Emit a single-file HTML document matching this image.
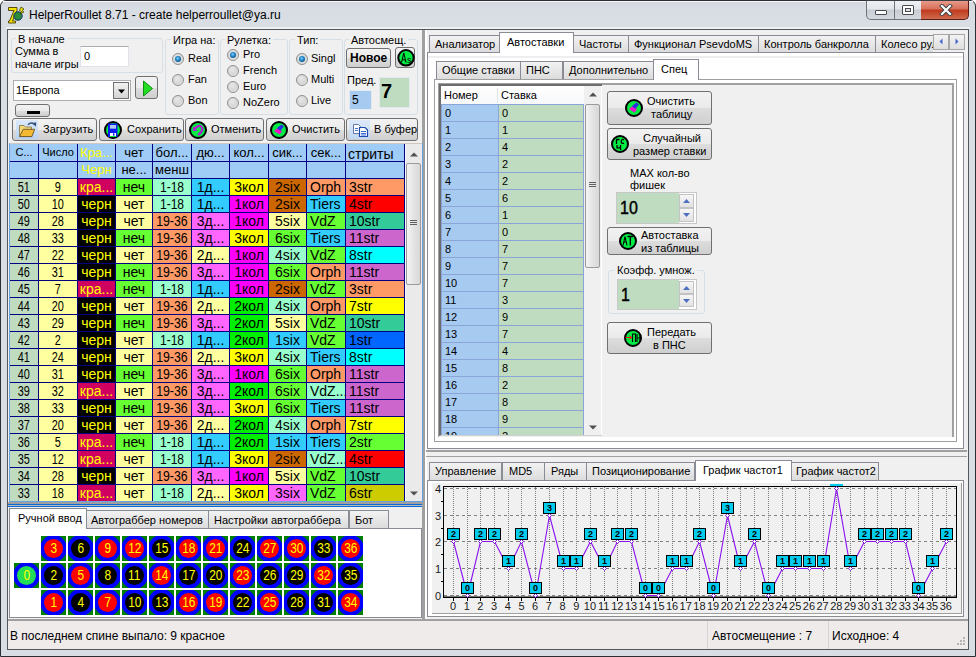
<!DOCTYPE html><html><head><meta charset="utf-8"><style>
*{margin:0;padding:0;box-sizing:border-box}
html,body{width:976px;height:657px;overflow:hidden;background:#fff}
body{position:relative;font-family:"Liberation Sans",sans-serif;font-size:11px;color:#000}
div{position:absolute}
.t{white-space:nowrap;line-height:13px}
.btn{border:1px solid #707070;border-radius:3px;background:linear-gradient(#f2f2f2 0%,#ebebeb 50%,#dddddd 51%,#cfcfcf 100%)}
.gb{border:1px solid #d5dfe5;border-radius:3px}
.radio{width:12px;height:12px;border-radius:50%;border:1px solid #8e8f8f;background:radial-gradient(circle at 40% 35%,#e8e8e8 0%,#d6d6d6 55%,#f4f4f4 100%)}
.radio.on::after{content:"";position:absolute;left:2px;top:2px;width:6px;height:6px;border-radius:50%;background:radial-gradient(circle at 45% 40%,#7fd0ff 0%,#1a7fc0 45%,#0a3c6a 100%)}
.tab{border:1px solid #898c95;border-bottom:none;background:linear-gradient(#f2f2f2,#dcdcdc)}
.tabon{border:1px solid #898c95;border-bottom:none;background:#fff}
.cell{overflow:hidden;white-space:nowrap;line-height:16px}
</style></head><body><div style="left:0;top:0;width:976px;height:657px;border:1px solid #2b2f33;border-radius:6px 6px 0 0;background:linear-gradient(#d5d8dd 0px,#d8dce3 6px,#d9dde4 29px,#d9dde4 100%)"></div>
<div style="left:3px;top:1px;width:970px;height:1px;background:#f4f6f9"></div>
<div style="left:6px;top:27px;width:964px;height:2px;background:#eef0f3"></div>
<div class="t" style="left:29px;top:8px;font-size:12px;line-height:15px;color:#000">HelperRoullet 8.71 - create helperroullet@ya.ru</div>
<svg style="position:absolute;left:7px;top:6px" width="18" height="18" viewBox="0 0 18 18">
<path d="M1.5 1.5 H10 V4.5 L5.5 15 H8.5 V17 H1.5 V15 H2.5 L7 4.5 H1.5 Z" fill="#f2e200" stroke="#4a3c00" stroke-width="0.9"/>
<circle cx="11" cy="10" r="4.2" fill="#2c8c3c" stroke="#0d2a6a" stroke-width="1"/>
<path d="M14 1 L17 3 L15 4.5 L17 6 L13 8 L14.5 5.5 L12.5 4.5 Z" fill="#f0e800" stroke="#303000" stroke-width="0.7"/>
</svg>
<div style="left:866px;top:0;width:29px;height:20px;border:1px solid #6f7478;border-top:none;border-radius:0 0 0 5px;background:linear-gradient(#eef1f4 0%,#e3e7ec 45%,#c9ced4 55%,#d5d9de 100%)"></div>
<div style="left:875px;top:10px;width:12px;height:5px;border:1px solid #474b50;background:#fff;border-radius:1px"></div>
<div style="left:894px;top:0;width:28px;height:20px;border:1px solid #6f7478;border-top:none;background:linear-gradient(#eef1f4 0%,#e3e7ec 45%,#c9ced4 55%,#d5d9de 100%)"></div>
<div style="left:902px;top:5px;width:12px;height:10px;border:1px solid #474b50;background:#fff;border-radius:1px"></div>
<div style="left:905px;top:8px;width:6px;height:4px;border:1px solid #474b50;background:#dfe3e8"></div>
<div style="left:921px;top:0;width:48px;height:20px;border:1px solid #5a1d12;border-top:none;border-left:none;border-radius:0 0 5px 0;background:linear-gradient(#e8a08f 0%,#d9725c 45%,#c13b1e 55%,#cf6a4e 100%)"></div>
<svg style="position:absolute;left:938px;top:4px" width="16" height="12" viewBox="0 0 16 12"><path d="M4 2 L12 10 M12 2 L4 10" stroke="#3b3f46" stroke-width="4" stroke-linecap="square"/><path d="M4 2 L12 10 M12 2 L4 10" stroke="#fff" stroke-width="2.2" stroke-linecap="square"/></svg>
<div style="left:866px;top:0;width:103px;height:1px;background:#3a3d42"></div>
<div style="left:7px;top:29px;width:962px;height:621px;border:1px solid #52575c;background:#f0f0f0"></div>
<div class="gb" style="left:11px;top:38px;width:152px;height:35px"></div>
<div class="t" style="left:16px;top:33px;padding:0 2px;background:#f0f0f0">В начале</div>
<div class="t" style="left:15px;top:45px;">Сумма в</div>
<div class="t" style="left:15px;top:58px;">начале игры</div>
<div style="left:80px;top:46px;width:49px;height:21px;border:1px solid #e2e3ea;border-top-color:#abadb3;background:#fff"></div>
<div class="t" style="left:84px;top:50px;">0</div>
<div style="left:13px;top:80px;width:118px;height:21px;border:1px solid #abadb3;background:#fff"></div>
<div class="t" style="left:16px;top:84px;">1Европа</div>
<div style="left:113px;top:82px;width:16px;height:17px;border:1px solid #707070;background:linear-gradient(#f2f2f2,#d5d5d5)"></div>
<svg style="position:absolute;left:118px;top:89px" width="7" height="5"><path d="M0 0.5H7L3.5 4.5Z" fill="#000"/></svg>
<div class="btn" style="left:135px;top:76px;width:23px;height:23px"></div>
<svg style="position:absolute;left:142px;top:80px" width="12" height="17"><path d="M1.5 1 L10.5 8.5 L1.5 16 Z" fill="#22dd22" stroke="#109010" stroke-width="1"/></svg>
<div class="btn" style="left:15px;top:104px;width:35px;height:13px"></div>
<div style="left:27px;top:111px;width:13px;height:3px;background:#000"></div>
<div class="gb" style="left:165px;top:39px;width:54px;height:76px"></div>
<div class="t" style="left:171px;top:34px;padding:0 2px;background:#f0f0f0">Игра на:</div>
<div class="radio on" style="left:172px;top:53px"></div>
<div class="t" style="left:188px;top:52px;">Real</div>
<div class="radio" style="left:172px;top:74px"></div>
<div class="t" style="left:188px;top:73px;">Fan</div>
<div class="radio" style="left:172px;top:95px"></div>
<div class="t" style="left:188px;top:94px;">Bon</div>
<div class="gb" style="left:220px;top:39px;width:68px;height:76px"></div>
<div class="t" style="left:225px;top:34px;padding:0 2px;background:#f0f0f0">Рулетка:</div>
<div class="radio on" style="left:227px;top:49px"></div>
<div class="t" style="left:243px;top:48px;">Pro</div>
<div class="radio" style="left:227px;top:65px"></div>
<div class="t" style="left:243px;top:64px;">French</div>
<div class="radio" style="left:227px;top:81px"></div>
<div class="t" style="left:243px;top:80px;">Euro</div>
<div class="radio" style="left:227px;top:97px"></div>
<div class="t" style="left:243px;top:96px;">NoZero</div>
<div class="gb" style="left:289px;top:39px;width:54px;height:76px"></div>
<div class="t" style="left:295px;top:34px;padding:0 2px;background:#f0f0f0">Тип:</div>
<div class="radio on" style="left:296px;top:53px"></div>
<div class="t" style="left:311px;top:52px;">Singl</div>
<div class="radio" style="left:296px;top:74px"></div>
<div class="t" style="left:311px;top:73px;">Multi</div>
<div class="radio" style="left:296px;top:95px"></div>
<div class="t" style="left:311px;top:94px;">Live</div>
<div class="gb" style="left:344px;top:39px;width:74px;height:76px"></div>
<div class="t" style="left:349px;top:34px;padding:0 2px;background:#f0f0f0">Автосмещ.</div>
<div class="btn" style="left:346px;top:48px;width:45px;height:20px"></div>
<div class="t" style="left:350px;top:51px;font-weight:bold;font-size:12px;line-height:14px">Новое</div>
<div class="btn" style="left:395px;top:47px;width:20px;height:21px"></div>
<svg style="position:absolute;left:396px;top:48px" width="20" height="20" viewBox="0 0 20 20"><circle cx="10" cy="9.8" r="7.7" fill="#00ec44" stroke="#000" stroke-width="2"/><path d="M5.5 14.5 L7.8 5 L10 14.5 M6.3 11.8 H9.3" stroke="#000" stroke-width="1" fill="none"/><text x="13.2" y="14.5" font-family="Liberation Sans" font-size="9" text-anchor="middle" fill="#000">s</text></svg>
<div class="t" style="left:347px;top:74px;">Пред.</div>
<div style="left:349px;top:90px;width:23px;height:20px;border:1px solid #e3e9ef;background:#a6caf0"></div>
<div class="t" style="left:352px;top:93px;font-size:12px;line-height:14px">5</div>
<div style="left:379px;top:77px;width:31px;height:31px;border:1px solid #e3e9ef;background:#c0dcc0"></div>
<div class="t" style="left:381px;top:80px;font-size:20px;line-height:22px;font-weight:bold">7</div>
<div class="btn" style="left:12px;top:118px;width:85px;height:23px"></div>
<div style="left:16px;top:120px;width:22px;height:19px;background:linear-gradient(#dde9f9,#b8d2f1)"></div>
<svg style="position:absolute;left:15px;top:120px" width="24" height="19" viewBox="0 0 24 19"><path d="M4.5 5.5 H9 L10.5 7 H16.5 V16.5 H4.5 Z" fill="#f3d873" stroke="#8a7a50" stroke-width="0.9"/><path d="M8.2 9.3 H19.7 L16.9 16.6 H4.6 Z" fill="#f4b933" stroke="#6a5424" stroke-width="0.9"/><path d="M13 4.8 Q16 1.6 19.2 4.2" stroke="#34507a" stroke-width="1.6" fill="none"/><path d="M17.3 3.2 L21 6.8 L21.2 2.2 Z" fill="#34507a"/></svg>
<div class="t" style="left:43px;top:123px;">Загрузить</div>
<div class="btn" style="left:99px;top:118px;width:85px;height:23px"></div>
<svg style="position:absolute;left:103px;top:120px" width="20" height="20" viewBox="0 0 20 20"><circle cx="10" cy="10" r="8" fill="#00ec44" stroke="#000" stroke-width="2"/><rect x="5" y="3.5" width="9.5" height="13.5" fill="#0a1cf0"/><rect x="7" y="5" width="6" height="3.7" fill="#b0c8f0"/><rect x="7" y="13" width="6" height="3" fill="#fff"/><rect x="10" y="13.3" width="1.4" height="2.4" fill="#0a1cf0"/><rect x="7" y="16" width="6" height="1" fill="#00ec44"/></svg>
<div class="t" style="left:127px;top:123px;">Сохранить</div>
<div class="btn" style="left:185px;top:118px;width:79px;height:23px"></div>
<svg style="position:absolute;left:188px;top:120px" width="20" height="20" viewBox="0 0 20 20"><circle cx="10" cy="10" r="8" fill="#00ec44" stroke="#000" stroke-width="2"/><path d="M5 6.5 L5 11 L9.5 11 Z" fill="#b020d0"/><path d="M6.5 9 Q9 5.5 12.5 6 Q15 7 14 10.5 Q13 13 10 15" stroke="#b020d0" stroke-width="2.2" fill="none"/></svg>
<div class="t" style="left:211px;top:123px;">Отменить</div>
<div class="btn" style="left:266px;top:118px;width:79px;height:23px"></div>
<svg style="position:absolute;left:269px;top:120px" width="20" height="20" viewBox="0 0 20 20"><circle cx="10" cy="10" r="8" fill="#00ec44" stroke="#000" stroke-width="2"/><path d="M8 8 L12.5 4.5 L15 6.5 L12.5 9.5 L11 12.5 Z" fill="#2a30e0"/><path d="M5 11 L8 8.5 L13 11.5 L10.5 14.5 Z" fill="#f010c8"/></svg>
<div class="t" style="left:292px;top:123px;">Очистить</div>
<div class="btn" style="left:346px;top:118px;width:72px;height:23px"></div>
<div style="left:349px;top:120px;width:21px;height:19px;background:linear-gradient(#dde9f9,#c2d8f2)"></div>
<svg style="position:absolute;left:349px;top:120px" width="21" height="19" viewBox="0 0 21 19"><path d="M4.5 4.5 H9.5 L11.5 6.5 V13.5 H4.5 Z" fill="#fff" stroke="#6478a8" stroke-width="1"/><path d="M6 8.5H9M6 10.5H9" stroke="#4a78d0" stroke-width="1"/><path d="M10.5 7.5 H16 L18.5 10 V16.5 H10.5 Z" fill="#fff" stroke="#1c48b0" stroke-width="1.2"/><path d="M12 11.5H17M12 13.5H17M12 15H17" stroke="#3a6ad8" stroke-width="1"/></svg>
<div class="t" style="left:374px;top:123px;">В буфер</div>
<div style="left:9px;top:143px;width:414px;height:359px;border:1px solid #6aa2e0;border-top-color:#d0c8c0;background:#f0f0f0"></div>
<div style="left:10px;top:144px;width:395px;height:357px;background:#000080"></div>
<div class="cell" style="left:10px;top:144px;width:28px;height:17px;background:#9fcbf7"></div>
<div class="cell" style="left:10px;top:144px;width:28px;height:17px;color:#000;text-align:center;font-size:11px;line-height:17px;">С...</div>
<div class="cell" style="left:39px;top:144px;width:38px;height:17px;background:#9fcbf7"></div>
<div class="cell" style="left:39px;top:144px;width:38px;height:17px;color:#000;text-align:center;font-size:11px;line-height:17px;">Число</div>
<div class="cell" style="left:78px;top:144px;width:37px;height:17px;background:#9fcbf7"></div>
<div class="cell" style="left:78px;top:144px;width:37px;height:17px;color:#ffff00;text-align:center;font-size:13px;line-height:17px;">Кра...</div>
<div class="cell" style="left:116px;top:144px;width:36px;height:17px;background:#9fcbf7"></div>
<div class="cell" style="left:116px;top:144px;width:36px;height:17px;color:#000;text-align:center;font-size:13px;line-height:17px;">чет</div>
<div class="cell" style="left:153px;top:144px;width:38px;height:17px;background:#9fcbf7"></div>
<div class="cell" style="left:153px;top:144px;width:38px;height:17px;color:#000;text-align:center;font-size:13px;line-height:17px;">бол...</div>
<div class="cell" style="left:192px;top:144px;width:37px;height:17px;background:#9fcbf7"></div>
<div class="cell" style="left:192px;top:144px;width:37px;height:17px;color:#000;text-align:center;font-size:13px;line-height:17px;">дю...</div>
<div class="cell" style="left:230px;top:144px;width:38px;height:17px;background:#9fcbf7"></div>
<div class="cell" style="left:230px;top:144px;width:38px;height:17px;color:#000;text-align:center;font-size:13px;line-height:17px;">кол...</div>
<div class="cell" style="left:269px;top:144px;width:37px;height:17px;background:#9fcbf7"></div>
<div class="cell" style="left:269px;top:144px;width:37px;height:17px;color:#000;text-align:center;font-size:13px;line-height:17px;">сик...</div>
<div class="cell" style="left:307px;top:144px;width:38px;height:17px;background:#9fcbf7"></div>
<div class="cell" style="left:307px;top:144px;width:38px;height:17px;color:#000;text-align:center;font-size:13px;line-height:17px;">сек...</div>
<div class="cell" style="left:346px;top:144px;width:58px;height:17px;background:#9fcbf7"></div>
<div class="cell" style="left:346px;top:144px;width:58px;height:17px;color:#000;text-align:center;font-size:14px;line-height:17px;"></div>
<div class="t" style="left:348px;top:146px;font-size:14px;line-height:16px">стриты</div>
<div class="cell" style="left:10px;top:162px;width:28px;height:16px;background:#9fcbf7"></div>
<div class="cell" style="left:10px;top:162px;width:28px;height:16px;color:#000;text-align:center;font-size:13px;line-height:16px;"></div>
<div class="cell" style="left:39px;top:162px;width:38px;height:16px;background:#9fcbf7"></div>
<div class="cell" style="left:39px;top:162px;width:38px;height:16px;color:#000;text-align:center;font-size:13px;line-height:16px;"></div>
<div class="cell" style="left:78px;top:162px;width:37px;height:16px;background:#9fcbf7"></div>
<div class="cell" style="left:78px;top:162px;width:37px;height:16px;color:#ffff00;text-align:center;font-size:13px;line-height:16px;">Черн</div>
<div class="cell" style="left:116px;top:162px;width:36px;height:16px;background:#9fcbf7"></div>
<div class="cell" style="left:116px;top:162px;width:36px;height:16px;color:#000;text-align:center;font-size:13px;line-height:16px;">не...</div>
<div class="cell" style="left:153px;top:162px;width:38px;height:16px;background:#9fcbf7"></div>
<div class="cell" style="left:153px;top:162px;width:38px;height:16px;color:#000;text-align:center;font-size:13px;line-height:16px;">менш</div>
<div class="cell" style="left:192px;top:162px;width:37px;height:16px;background:#9fcbf7"></div>
<div class="cell" style="left:192px;top:162px;width:37px;height:16px;color:#000;text-align:center;font-size:13px;line-height:16px;"></div>
<div class="cell" style="left:230px;top:162px;width:38px;height:16px;background:#9fcbf7"></div>
<div class="cell" style="left:230px;top:162px;width:38px;height:16px;color:#000;text-align:center;font-size:13px;line-height:16px;"></div>
<div class="cell" style="left:269px;top:162px;width:37px;height:16px;background:#9fcbf7"></div>
<div class="cell" style="left:269px;top:162px;width:37px;height:16px;color:#000;text-align:center;font-size:13px;line-height:16px;"></div>
<div class="cell" style="left:307px;top:162px;width:38px;height:16px;background:#9fcbf7"></div>
<div class="cell" style="left:307px;top:162px;width:38px;height:16px;color:#000;text-align:center;font-size:13px;line-height:16px;"></div>
<div class="cell" style="left:346px;top:162px;width:58px;height:16px;background:#9fcbf7"></div>
<div class="cell" style="left:346px;top:162px;width:58px;height:16px;color:#000;text-align:center;font-size:13px;line-height:16px;"></div>
<div class="cell" style="left:10px;top:179px;width:28px;height:16px;background:#c0dcc0"></div>
<div class="cell" style="left:10px;top:179px;width:28px;height:16px;color:#000;text-align:center;font-size:14px;line-height:16px;"><span style="display:inline-block;transform:scaleX(0.78)">51</span></div>
<div class="cell" style="left:39px;top:179px;width:38px;height:16px;background:#ffff9f"></div>
<div class="cell" style="left:39px;top:179px;width:38px;height:16px;color:#000;text-align:center;font-size:14px;line-height:16px;"><span style="display:inline-block;transform:scaleX(0.78)">9</span></div>
<div class="cell" style="left:78px;top:179px;width:37px;height:16px;background:#d00060"></div>
<div class="cell" style="left:78px;top:179px;width:37px;height:16px;color:#ffff00;text-align:center;font-size:14px;line-height:16px;">кра...</div>
<div class="cell" style="left:116px;top:179px;width:36px;height:16px;background:#66ff33"></div>
<div class="cell" style="left:116px;top:179px;width:36px;height:16px;color:#000;text-align:center;font-size:14px;line-height:16px;">неч</div>
<div class="cell" style="left:153px;top:179px;width:38px;height:16px;background:#99ffcc"></div>
<div class="cell" style="left:153px;top:179px;width:38px;height:16px;color:#000;text-align:center;font-size:14px;line-height:16px;"><span style="display:inline-block;transform:scaleX(0.86)">1-18</span></div>
<div class="cell" style="left:192px;top:179px;width:37px;height:16px;background:#33ccff"></div>
<div class="cell" style="left:192px;top:179px;width:37px;height:16px;color:#000;text-align:center;font-size:14px;line-height:16px;">1д...</div>
<div class="cell" style="left:230px;top:179px;width:38px;height:16px;background:#ffff00"></div>
<div class="cell" style="left:230px;top:179px;width:38px;height:16px;color:#000;text-align:center;font-size:14px;line-height:16px;">3кол</div>
<div class="cell" style="left:269px;top:179px;width:37px;height:16px;background:#cc6600"></div>
<div class="cell" style="left:269px;top:179px;width:37px;height:16px;color:#000;text-align:center;font-size:14px;line-height:16px;">2six</div>
<div class="cell" style="left:307px;top:179px;width:38px;height:16px;background:#ff9966"></div>
<div class="cell" style="left:307px;top:179px;width:38px;height:16px;color:#000;text-align:left;padding-left:3px;font-size:14px;line-height:16px;">Orph</div>
<div class="cell" style="left:346px;top:179px;width:58px;height:16px;background:#ff9966"></div>
<div class="cell" style="left:346px;top:179px;width:58px;height:16px;color:#000;text-align:left;padding-left:3px;font-size:14px;line-height:16px;">3str</div>
<div class="cell" style="left:10px;top:196px;width:28px;height:16px;background:#c0dcc0"></div>
<div class="cell" style="left:10px;top:196px;width:28px;height:16px;color:#000;text-align:center;font-size:14px;line-height:16px;"><span style="display:inline-block;transform:scaleX(0.78)">50</span></div>
<div class="cell" style="left:39px;top:196px;width:38px;height:16px;background:#ffff9f"></div>
<div class="cell" style="left:39px;top:196px;width:38px;height:16px;color:#000;text-align:center;font-size:14px;line-height:16px;"><span style="display:inline-block;transform:scaleX(0.78)">10</span></div>
<div class="cell" style="left:78px;top:196px;width:37px;height:16px;background:#000000"></div>
<div class="cell" style="left:78px;top:196px;width:37px;height:16px;color:#ffff00;text-align:center;font-size:14px;line-height:16px;">черн</div>
<div class="cell" style="left:116px;top:196px;width:36px;height:16px;background:#ffff9f"></div>
<div class="cell" style="left:116px;top:196px;width:36px;height:16px;color:#000;text-align:center;font-size:14px;line-height:16px;">чет</div>
<div class="cell" style="left:153px;top:196px;width:38px;height:16px;background:#99ffcc"></div>
<div class="cell" style="left:153px;top:196px;width:38px;height:16px;color:#000;text-align:center;font-size:14px;line-height:16px;"><span style="display:inline-block;transform:scaleX(0.86)">1-18</span></div>
<div class="cell" style="left:192px;top:196px;width:37px;height:16px;background:#33ccff"></div>
<div class="cell" style="left:192px;top:196px;width:37px;height:16px;color:#000;text-align:center;font-size:14px;line-height:16px;">1д...</div>
<div class="cell" style="left:230px;top:196px;width:38px;height:16px;background:#ff00ff"></div>
<div class="cell" style="left:230px;top:196px;width:38px;height:16px;color:#000;text-align:center;font-size:14px;line-height:16px;">1кол</div>
<div class="cell" style="left:269px;top:196px;width:37px;height:16px;background:#cc6600"></div>
<div class="cell" style="left:269px;top:196px;width:37px;height:16px;color:#000;text-align:center;font-size:14px;line-height:16px;">2six</div>
<div class="cell" style="left:307px;top:196px;width:38px;height:16px;background:#33ccff"></div>
<div class="cell" style="left:307px;top:196px;width:38px;height:16px;color:#000;text-align:left;padding-left:3px;font-size:14px;line-height:16px;">Tiers</div>
<div class="cell" style="left:346px;top:196px;width:58px;height:16px;background:#ff0000"></div>
<div class="cell" style="left:346px;top:196px;width:58px;height:16px;color:#000;text-align:left;padding-left:3px;font-size:14px;line-height:16px;">4str</div>
<div class="cell" style="left:10px;top:213px;width:28px;height:16px;background:#c0dcc0"></div>
<div class="cell" style="left:10px;top:213px;width:28px;height:16px;color:#000;text-align:center;font-size:14px;line-height:16px;"><span style="display:inline-block;transform:scaleX(0.78)">49</span></div>
<div class="cell" style="left:39px;top:213px;width:38px;height:16px;background:#ffff9f"></div>
<div class="cell" style="left:39px;top:213px;width:38px;height:16px;color:#000;text-align:center;font-size:14px;line-height:16px;"><span style="display:inline-block;transform:scaleX(0.78)">28</span></div>
<div class="cell" style="left:78px;top:213px;width:37px;height:16px;background:#000000"></div>
<div class="cell" style="left:78px;top:213px;width:37px;height:16px;color:#ffff00;text-align:center;font-size:14px;line-height:16px;">черн</div>
<div class="cell" style="left:116px;top:213px;width:36px;height:16px;background:#ffff9f"></div>
<div class="cell" style="left:116px;top:213px;width:36px;height:16px;color:#000;text-align:center;font-size:14px;line-height:16px;">чет</div>
<div class="cell" style="left:153px;top:213px;width:38px;height:16px;background:#ff9966"></div>
<div class="cell" style="left:153px;top:213px;width:38px;height:16px;color:#000;text-align:center;font-size:14px;line-height:16px;"><span style="display:inline-block;transform:scaleX(0.88)">19-36</span></div>
<div class="cell" style="left:192px;top:213px;width:37px;height:16px;background:#ff66ff"></div>
<div class="cell" style="left:192px;top:213px;width:37px;height:16px;color:#000;text-align:center;font-size:14px;line-height:16px;">3д...</div>
<div class="cell" style="left:230px;top:213px;width:38px;height:16px;background:#ff00ff"></div>
<div class="cell" style="left:230px;top:213px;width:38px;height:16px;color:#000;text-align:center;font-size:14px;line-height:16px;">1кол</div>
<div class="cell" style="left:269px;top:213px;width:37px;height:16px;background:#ffff9f"></div>
<div class="cell" style="left:269px;top:213px;width:37px;height:16px;color:#000;text-align:center;font-size:14px;line-height:16px;">5six</div>
<div class="cell" style="left:307px;top:213px;width:38px;height:16px;background:#66ff33"></div>
<div class="cell" style="left:307px;top:213px;width:38px;height:16px;color:#000;text-align:left;padding-left:3px;font-size:14px;line-height:16px;">VdZ</div>
<div class="cell" style="left:346px;top:213px;width:58px;height:16px;background:#33cc99"></div>
<div class="cell" style="left:346px;top:213px;width:58px;height:16px;color:#000;text-align:left;padding-left:3px;font-size:14px;line-height:16px;">10str</div>
<div class="cell" style="left:10px;top:230px;width:28px;height:16px;background:#c0dcc0"></div>
<div class="cell" style="left:10px;top:230px;width:28px;height:16px;color:#000;text-align:center;font-size:14px;line-height:16px;"><span style="display:inline-block;transform:scaleX(0.78)">48</span></div>
<div class="cell" style="left:39px;top:230px;width:38px;height:16px;background:#ffff9f"></div>
<div class="cell" style="left:39px;top:230px;width:38px;height:16px;color:#000;text-align:center;font-size:14px;line-height:16px;"><span style="display:inline-block;transform:scaleX(0.78)">33</span></div>
<div class="cell" style="left:78px;top:230px;width:37px;height:16px;background:#000000"></div>
<div class="cell" style="left:78px;top:230px;width:37px;height:16px;color:#ffff00;text-align:center;font-size:14px;line-height:16px;">черн</div>
<div class="cell" style="left:116px;top:230px;width:36px;height:16px;background:#66ff33"></div>
<div class="cell" style="left:116px;top:230px;width:36px;height:16px;color:#000;text-align:center;font-size:14px;line-height:16px;">неч</div>
<div class="cell" style="left:153px;top:230px;width:38px;height:16px;background:#ff9966"></div>
<div class="cell" style="left:153px;top:230px;width:38px;height:16px;color:#000;text-align:center;font-size:14px;line-height:16px;"><span style="display:inline-block;transform:scaleX(0.88)">19-36</span></div>
<div class="cell" style="left:192px;top:230px;width:37px;height:16px;background:#ff66ff"></div>
<div class="cell" style="left:192px;top:230px;width:37px;height:16px;color:#000;text-align:center;font-size:14px;line-height:16px;">3д...</div>
<div class="cell" style="left:230px;top:230px;width:38px;height:16px;background:#ffff00"></div>
<div class="cell" style="left:230px;top:230px;width:38px;height:16px;color:#000;text-align:center;font-size:14px;line-height:16px;">3кол</div>
<div class="cell" style="left:269px;top:230px;width:37px;height:16px;background:#66ff33"></div>
<div class="cell" style="left:269px;top:230px;width:37px;height:16px;color:#000;text-align:center;font-size:14px;line-height:16px;">6six</div>
<div class="cell" style="left:307px;top:230px;width:38px;height:16px;background:#33ccff"></div>
<div class="cell" style="left:307px;top:230px;width:38px;height:16px;color:#000;text-align:left;padding-left:3px;font-size:14px;line-height:16px;">Tiers</div>
<div class="cell" style="left:346px;top:230px;width:58px;height:16px;background:#cc66cc"></div>
<div class="cell" style="left:346px;top:230px;width:58px;height:16px;color:#000;text-align:left;padding-left:3px;font-size:14px;line-height:16px;">11str</div>
<div class="cell" style="left:10px;top:247px;width:28px;height:16px;background:#c0dcc0"></div>
<div class="cell" style="left:10px;top:247px;width:28px;height:16px;color:#000;text-align:center;font-size:14px;line-height:16px;"><span style="display:inline-block;transform:scaleX(0.78)">47</span></div>
<div class="cell" style="left:39px;top:247px;width:38px;height:16px;background:#ffff9f"></div>
<div class="cell" style="left:39px;top:247px;width:38px;height:16px;color:#000;text-align:center;font-size:14px;line-height:16px;"><span style="display:inline-block;transform:scaleX(0.78)">22</span></div>
<div class="cell" style="left:78px;top:247px;width:37px;height:16px;background:#000000"></div>
<div class="cell" style="left:78px;top:247px;width:37px;height:16px;color:#ffff00;text-align:center;font-size:14px;line-height:16px;">черн</div>
<div class="cell" style="left:116px;top:247px;width:36px;height:16px;background:#ffff9f"></div>
<div class="cell" style="left:116px;top:247px;width:36px;height:16px;color:#000;text-align:center;font-size:14px;line-height:16px;">чет</div>
<div class="cell" style="left:153px;top:247px;width:38px;height:16px;background:#ff9966"></div>
<div class="cell" style="left:153px;top:247px;width:38px;height:16px;color:#000;text-align:center;font-size:14px;line-height:16px;"><span style="display:inline-block;transform:scaleX(0.88)">19-36</span></div>
<div class="cell" style="left:192px;top:247px;width:37px;height:16px;background:#ffff9f"></div>
<div class="cell" style="left:192px;top:247px;width:37px;height:16px;color:#000;text-align:center;font-size:14px;line-height:16px;">2д...</div>
<div class="cell" style="left:230px;top:247px;width:38px;height:16px;background:#ff00ff"></div>
<div class="cell" style="left:230px;top:247px;width:38px;height:16px;color:#000;text-align:center;font-size:14px;line-height:16px;">1кол</div>
<div class="cell" style="left:269px;top:247px;width:37px;height:16px;background:#99ffcc"></div>
<div class="cell" style="left:269px;top:247px;width:37px;height:16px;color:#000;text-align:center;font-size:14px;line-height:16px;">4six</div>
<div class="cell" style="left:307px;top:247px;width:38px;height:16px;background:#66ff33"></div>
<div class="cell" style="left:307px;top:247px;width:38px;height:16px;color:#000;text-align:left;padding-left:3px;font-size:14px;line-height:16px;">VdZ</div>
<div class="cell" style="left:346px;top:247px;width:58px;height:16px;background:#00ffff"></div>
<div class="cell" style="left:346px;top:247px;width:58px;height:16px;color:#000;text-align:left;padding-left:3px;font-size:14px;line-height:16px;">8str</div>
<div class="cell" style="left:10px;top:264px;width:28px;height:16px;background:#c0dcc0"></div>
<div class="cell" style="left:10px;top:264px;width:28px;height:16px;color:#000;text-align:center;font-size:14px;line-height:16px;"><span style="display:inline-block;transform:scaleX(0.78)">46</span></div>
<div class="cell" style="left:39px;top:264px;width:38px;height:16px;background:#ffff9f"></div>
<div class="cell" style="left:39px;top:264px;width:38px;height:16px;color:#000;text-align:center;font-size:14px;line-height:16px;"><span style="display:inline-block;transform:scaleX(0.78)">31</span></div>
<div class="cell" style="left:78px;top:264px;width:37px;height:16px;background:#000000"></div>
<div class="cell" style="left:78px;top:264px;width:37px;height:16px;color:#ffff00;text-align:center;font-size:14px;line-height:16px;">черн</div>
<div class="cell" style="left:116px;top:264px;width:36px;height:16px;background:#66ff33"></div>
<div class="cell" style="left:116px;top:264px;width:36px;height:16px;color:#000;text-align:center;font-size:14px;line-height:16px;">неч</div>
<div class="cell" style="left:153px;top:264px;width:38px;height:16px;background:#ff9966"></div>
<div class="cell" style="left:153px;top:264px;width:38px;height:16px;color:#000;text-align:center;font-size:14px;line-height:16px;"><span style="display:inline-block;transform:scaleX(0.88)">19-36</span></div>
<div class="cell" style="left:192px;top:264px;width:37px;height:16px;background:#ff66ff"></div>
<div class="cell" style="left:192px;top:264px;width:37px;height:16px;color:#000;text-align:center;font-size:14px;line-height:16px;">3д...</div>
<div class="cell" style="left:230px;top:264px;width:38px;height:16px;background:#ff00ff"></div>
<div class="cell" style="left:230px;top:264px;width:38px;height:16px;color:#000;text-align:center;font-size:14px;line-height:16px;">1кол</div>
<div class="cell" style="left:269px;top:264px;width:37px;height:16px;background:#66ff33"></div>
<div class="cell" style="left:269px;top:264px;width:37px;height:16px;color:#000;text-align:center;font-size:14px;line-height:16px;">6six</div>
<div class="cell" style="left:307px;top:264px;width:38px;height:16px;background:#ff9966"></div>
<div class="cell" style="left:307px;top:264px;width:38px;height:16px;color:#000;text-align:left;padding-left:3px;font-size:14px;line-height:16px;">Orph</div>
<div class="cell" style="left:346px;top:264px;width:58px;height:16px;background:#cc66cc"></div>
<div class="cell" style="left:346px;top:264px;width:58px;height:16px;color:#000;text-align:left;padding-left:3px;font-size:14px;line-height:16px;">11str</div>
<div class="cell" style="left:10px;top:281px;width:28px;height:16px;background:#c0dcc0"></div>
<div class="cell" style="left:10px;top:281px;width:28px;height:16px;color:#000;text-align:center;font-size:14px;line-height:16px;"><span style="display:inline-block;transform:scaleX(0.78)">45</span></div>
<div class="cell" style="left:39px;top:281px;width:38px;height:16px;background:#ffff9f"></div>
<div class="cell" style="left:39px;top:281px;width:38px;height:16px;color:#000;text-align:center;font-size:14px;line-height:16px;"><span style="display:inline-block;transform:scaleX(0.78)">7</span></div>
<div class="cell" style="left:78px;top:281px;width:37px;height:16px;background:#d00060"></div>
<div class="cell" style="left:78px;top:281px;width:37px;height:16px;color:#ffff00;text-align:center;font-size:14px;line-height:16px;">кра...</div>
<div class="cell" style="left:116px;top:281px;width:36px;height:16px;background:#66ff33"></div>
<div class="cell" style="left:116px;top:281px;width:36px;height:16px;color:#000;text-align:center;font-size:14px;line-height:16px;">неч</div>
<div class="cell" style="left:153px;top:281px;width:38px;height:16px;background:#99ffcc"></div>
<div class="cell" style="left:153px;top:281px;width:38px;height:16px;color:#000;text-align:center;font-size:14px;line-height:16px;"><span style="display:inline-block;transform:scaleX(0.86)">1-18</span></div>
<div class="cell" style="left:192px;top:281px;width:37px;height:16px;background:#33ccff"></div>
<div class="cell" style="left:192px;top:281px;width:37px;height:16px;color:#000;text-align:center;font-size:14px;line-height:16px;">1д...</div>
<div class="cell" style="left:230px;top:281px;width:38px;height:16px;background:#ff00ff"></div>
<div class="cell" style="left:230px;top:281px;width:38px;height:16px;color:#000;text-align:center;font-size:14px;line-height:16px;">1кол</div>
<div class="cell" style="left:269px;top:281px;width:37px;height:16px;background:#cc6600"></div>
<div class="cell" style="left:269px;top:281px;width:37px;height:16px;color:#000;text-align:center;font-size:14px;line-height:16px;">2six</div>
<div class="cell" style="left:307px;top:281px;width:38px;height:16px;background:#66ff33"></div>
<div class="cell" style="left:307px;top:281px;width:38px;height:16px;color:#000;text-align:left;padding-left:3px;font-size:14px;line-height:16px;">VdZ</div>
<div class="cell" style="left:346px;top:281px;width:58px;height:16px;background:#ff9966"></div>
<div class="cell" style="left:346px;top:281px;width:58px;height:16px;color:#000;text-align:left;padding-left:3px;font-size:14px;line-height:16px;">3str</div>
<div class="cell" style="left:10px;top:298px;width:28px;height:16px;background:#c0dcc0"></div>
<div class="cell" style="left:10px;top:298px;width:28px;height:16px;color:#000;text-align:center;font-size:14px;line-height:16px;"><span style="display:inline-block;transform:scaleX(0.78)">44</span></div>
<div class="cell" style="left:39px;top:298px;width:38px;height:16px;background:#ffff9f"></div>
<div class="cell" style="left:39px;top:298px;width:38px;height:16px;color:#000;text-align:center;font-size:14px;line-height:16px;"><span style="display:inline-block;transform:scaleX(0.78)">20</span></div>
<div class="cell" style="left:78px;top:298px;width:37px;height:16px;background:#000000"></div>
<div class="cell" style="left:78px;top:298px;width:37px;height:16px;color:#ffff00;text-align:center;font-size:14px;line-height:16px;">черн</div>
<div class="cell" style="left:116px;top:298px;width:36px;height:16px;background:#ffff9f"></div>
<div class="cell" style="left:116px;top:298px;width:36px;height:16px;color:#000;text-align:center;font-size:14px;line-height:16px;">чет</div>
<div class="cell" style="left:153px;top:298px;width:38px;height:16px;background:#ff9966"></div>
<div class="cell" style="left:153px;top:298px;width:38px;height:16px;color:#000;text-align:center;font-size:14px;line-height:16px;"><span style="display:inline-block;transform:scaleX(0.88)">19-36</span></div>
<div class="cell" style="left:192px;top:298px;width:37px;height:16px;background:#ffff9f"></div>
<div class="cell" style="left:192px;top:298px;width:37px;height:16px;color:#000;text-align:center;font-size:14px;line-height:16px;">2д...</div>
<div class="cell" style="left:230px;top:298px;width:38px;height:16px;background:#00ee00"></div>
<div class="cell" style="left:230px;top:298px;width:38px;height:16px;color:#000;text-align:center;font-size:14px;line-height:16px;">2кол</div>
<div class="cell" style="left:269px;top:298px;width:37px;height:16px;background:#99ffcc"></div>
<div class="cell" style="left:269px;top:298px;width:37px;height:16px;color:#000;text-align:center;font-size:14px;line-height:16px;">4six</div>
<div class="cell" style="left:307px;top:298px;width:38px;height:16px;background:#ff9966"></div>
<div class="cell" style="left:307px;top:298px;width:38px;height:16px;color:#000;text-align:left;padding-left:3px;font-size:14px;line-height:16px;">Orph</div>
<div class="cell" style="left:346px;top:298px;width:58px;height:16px;background:#ffff00"></div>
<div class="cell" style="left:346px;top:298px;width:58px;height:16px;color:#000;text-align:left;padding-left:3px;font-size:14px;line-height:16px;">7str</div>
<div class="cell" style="left:10px;top:315px;width:28px;height:16px;background:#c0dcc0"></div>
<div class="cell" style="left:10px;top:315px;width:28px;height:16px;color:#000;text-align:center;font-size:14px;line-height:16px;"><span style="display:inline-block;transform:scaleX(0.78)">43</span></div>
<div class="cell" style="left:39px;top:315px;width:38px;height:16px;background:#ffff9f"></div>
<div class="cell" style="left:39px;top:315px;width:38px;height:16px;color:#000;text-align:center;font-size:14px;line-height:16px;"><span style="display:inline-block;transform:scaleX(0.78)">29</span></div>
<div class="cell" style="left:78px;top:315px;width:37px;height:16px;background:#000000"></div>
<div class="cell" style="left:78px;top:315px;width:37px;height:16px;color:#ffff00;text-align:center;font-size:14px;line-height:16px;">черн</div>
<div class="cell" style="left:116px;top:315px;width:36px;height:16px;background:#66ff33"></div>
<div class="cell" style="left:116px;top:315px;width:36px;height:16px;color:#000;text-align:center;font-size:14px;line-height:16px;">неч</div>
<div class="cell" style="left:153px;top:315px;width:38px;height:16px;background:#ff9966"></div>
<div class="cell" style="left:153px;top:315px;width:38px;height:16px;color:#000;text-align:center;font-size:14px;line-height:16px;"><span style="display:inline-block;transform:scaleX(0.88)">19-36</span></div>
<div class="cell" style="left:192px;top:315px;width:37px;height:16px;background:#ff66ff"></div>
<div class="cell" style="left:192px;top:315px;width:37px;height:16px;color:#000;text-align:center;font-size:14px;line-height:16px;">3д...</div>
<div class="cell" style="left:230px;top:315px;width:38px;height:16px;background:#00ee00"></div>
<div class="cell" style="left:230px;top:315px;width:38px;height:16px;color:#000;text-align:center;font-size:14px;line-height:16px;">2кол</div>
<div class="cell" style="left:269px;top:315px;width:37px;height:16px;background:#ffff9f"></div>
<div class="cell" style="left:269px;top:315px;width:37px;height:16px;color:#000;text-align:center;font-size:14px;line-height:16px;">5six</div>
<div class="cell" style="left:307px;top:315px;width:38px;height:16px;background:#66ff33"></div>
<div class="cell" style="left:307px;top:315px;width:38px;height:16px;color:#000;text-align:left;padding-left:3px;font-size:14px;line-height:16px;">VdZ</div>
<div class="cell" style="left:346px;top:315px;width:58px;height:16px;background:#33cc99"></div>
<div class="cell" style="left:346px;top:315px;width:58px;height:16px;color:#000;text-align:left;padding-left:3px;font-size:14px;line-height:16px;">10str</div>
<div class="cell" style="left:10px;top:332px;width:28px;height:16px;background:#c0dcc0"></div>
<div class="cell" style="left:10px;top:332px;width:28px;height:16px;color:#000;text-align:center;font-size:14px;line-height:16px;"><span style="display:inline-block;transform:scaleX(0.78)">42</span></div>
<div class="cell" style="left:39px;top:332px;width:38px;height:16px;background:#ffff9f"></div>
<div class="cell" style="left:39px;top:332px;width:38px;height:16px;color:#000;text-align:center;font-size:14px;line-height:16px;"><span style="display:inline-block;transform:scaleX(0.78)">2</span></div>
<div class="cell" style="left:78px;top:332px;width:37px;height:16px;background:#000000"></div>
<div class="cell" style="left:78px;top:332px;width:37px;height:16px;color:#ffff00;text-align:center;font-size:14px;line-height:16px;">черн</div>
<div class="cell" style="left:116px;top:332px;width:36px;height:16px;background:#ffff9f"></div>
<div class="cell" style="left:116px;top:332px;width:36px;height:16px;color:#000;text-align:center;font-size:14px;line-height:16px;">чет</div>
<div class="cell" style="left:153px;top:332px;width:38px;height:16px;background:#99ffcc"></div>
<div class="cell" style="left:153px;top:332px;width:38px;height:16px;color:#000;text-align:center;font-size:14px;line-height:16px;"><span style="display:inline-block;transform:scaleX(0.86)">1-18</span></div>
<div class="cell" style="left:192px;top:332px;width:37px;height:16px;background:#33ccff"></div>
<div class="cell" style="left:192px;top:332px;width:37px;height:16px;color:#000;text-align:center;font-size:14px;line-height:16px;">1д...</div>
<div class="cell" style="left:230px;top:332px;width:38px;height:16px;background:#00ee00"></div>
<div class="cell" style="left:230px;top:332px;width:38px;height:16px;color:#000;text-align:center;font-size:14px;line-height:16px;">2кол</div>
<div class="cell" style="left:269px;top:332px;width:37px;height:16px;background:#33ccff"></div>
<div class="cell" style="left:269px;top:332px;width:37px;height:16px;color:#000;text-align:center;font-size:14px;line-height:16px;">1six</div>
<div class="cell" style="left:307px;top:332px;width:38px;height:16px;background:#66ff33"></div>
<div class="cell" style="left:307px;top:332px;width:38px;height:16px;color:#000;text-align:left;padding-left:3px;font-size:14px;line-height:16px;">VdZ</div>
<div class="cell" style="left:346px;top:332px;width:58px;height:16px;background:#0066ff"></div>
<div class="cell" style="left:346px;top:332px;width:58px;height:16px;color:#000;text-align:left;padding-left:3px;font-size:14px;line-height:16px;">1str</div>
<div class="cell" style="left:10px;top:349px;width:28px;height:16px;background:#c0dcc0"></div>
<div class="cell" style="left:10px;top:349px;width:28px;height:16px;color:#000;text-align:center;font-size:14px;line-height:16px;"><span style="display:inline-block;transform:scaleX(0.78)">41</span></div>
<div class="cell" style="left:39px;top:349px;width:38px;height:16px;background:#ffff9f"></div>
<div class="cell" style="left:39px;top:349px;width:38px;height:16px;color:#000;text-align:center;font-size:14px;line-height:16px;"><span style="display:inline-block;transform:scaleX(0.78)">24</span></div>
<div class="cell" style="left:78px;top:349px;width:37px;height:16px;background:#000000"></div>
<div class="cell" style="left:78px;top:349px;width:37px;height:16px;color:#ffff00;text-align:center;font-size:14px;line-height:16px;">черн</div>
<div class="cell" style="left:116px;top:349px;width:36px;height:16px;background:#ffff9f"></div>
<div class="cell" style="left:116px;top:349px;width:36px;height:16px;color:#000;text-align:center;font-size:14px;line-height:16px;">чет</div>
<div class="cell" style="left:153px;top:349px;width:38px;height:16px;background:#ff9966"></div>
<div class="cell" style="left:153px;top:349px;width:38px;height:16px;color:#000;text-align:center;font-size:14px;line-height:16px;"><span style="display:inline-block;transform:scaleX(0.88)">19-36</span></div>
<div class="cell" style="left:192px;top:349px;width:37px;height:16px;background:#ffff9f"></div>
<div class="cell" style="left:192px;top:349px;width:37px;height:16px;color:#000;text-align:center;font-size:14px;line-height:16px;">2д...</div>
<div class="cell" style="left:230px;top:349px;width:38px;height:16px;background:#ffff00"></div>
<div class="cell" style="left:230px;top:349px;width:38px;height:16px;color:#000;text-align:center;font-size:14px;line-height:16px;">3кол</div>
<div class="cell" style="left:269px;top:349px;width:37px;height:16px;background:#99ffcc"></div>
<div class="cell" style="left:269px;top:349px;width:37px;height:16px;color:#000;text-align:center;font-size:14px;line-height:16px;">4six</div>
<div class="cell" style="left:307px;top:349px;width:38px;height:16px;background:#33ccff"></div>
<div class="cell" style="left:307px;top:349px;width:38px;height:16px;color:#000;text-align:left;padding-left:3px;font-size:14px;line-height:16px;">Tiers</div>
<div class="cell" style="left:346px;top:349px;width:58px;height:16px;background:#00ffff"></div>
<div class="cell" style="left:346px;top:349px;width:58px;height:16px;color:#000;text-align:left;padding-left:3px;font-size:14px;line-height:16px;">8str</div>
<div class="cell" style="left:10px;top:366px;width:28px;height:16px;background:#c0dcc0"></div>
<div class="cell" style="left:10px;top:366px;width:28px;height:16px;color:#000;text-align:center;font-size:14px;line-height:16px;"><span style="display:inline-block;transform:scaleX(0.78)">40</span></div>
<div class="cell" style="left:39px;top:366px;width:38px;height:16px;background:#ffff9f"></div>
<div class="cell" style="left:39px;top:366px;width:38px;height:16px;color:#000;text-align:center;font-size:14px;line-height:16px;"><span style="display:inline-block;transform:scaleX(0.78)">31</span></div>
<div class="cell" style="left:78px;top:366px;width:37px;height:16px;background:#000000"></div>
<div class="cell" style="left:78px;top:366px;width:37px;height:16px;color:#ffff00;text-align:center;font-size:14px;line-height:16px;">черн</div>
<div class="cell" style="left:116px;top:366px;width:36px;height:16px;background:#66ff33"></div>
<div class="cell" style="left:116px;top:366px;width:36px;height:16px;color:#000;text-align:center;font-size:14px;line-height:16px;">неч</div>
<div class="cell" style="left:153px;top:366px;width:38px;height:16px;background:#ff9966"></div>
<div class="cell" style="left:153px;top:366px;width:38px;height:16px;color:#000;text-align:center;font-size:14px;line-height:16px;"><span style="display:inline-block;transform:scaleX(0.88)">19-36</span></div>
<div class="cell" style="left:192px;top:366px;width:37px;height:16px;background:#ff66ff"></div>
<div class="cell" style="left:192px;top:366px;width:37px;height:16px;color:#000;text-align:center;font-size:14px;line-height:16px;">3д...</div>
<div class="cell" style="left:230px;top:366px;width:38px;height:16px;background:#ff00ff"></div>
<div class="cell" style="left:230px;top:366px;width:38px;height:16px;color:#000;text-align:center;font-size:14px;line-height:16px;">1кол</div>
<div class="cell" style="left:269px;top:366px;width:37px;height:16px;background:#66ff33"></div>
<div class="cell" style="left:269px;top:366px;width:37px;height:16px;color:#000;text-align:center;font-size:14px;line-height:16px;">6six</div>
<div class="cell" style="left:307px;top:366px;width:38px;height:16px;background:#ff9966"></div>
<div class="cell" style="left:307px;top:366px;width:38px;height:16px;color:#000;text-align:left;padding-left:3px;font-size:14px;line-height:16px;">Orph</div>
<div class="cell" style="left:346px;top:366px;width:58px;height:16px;background:#cc66cc"></div>
<div class="cell" style="left:346px;top:366px;width:58px;height:16px;color:#000;text-align:left;padding-left:3px;font-size:14px;line-height:16px;">11str</div>
<div class="cell" style="left:10px;top:383px;width:28px;height:16px;background:#c0dcc0"></div>
<div class="cell" style="left:10px;top:383px;width:28px;height:16px;color:#000;text-align:center;font-size:14px;line-height:16px;"><span style="display:inline-block;transform:scaleX(0.78)">39</span></div>
<div class="cell" style="left:39px;top:383px;width:38px;height:16px;background:#ffff9f"></div>
<div class="cell" style="left:39px;top:383px;width:38px;height:16px;color:#000;text-align:center;font-size:14px;line-height:16px;"><span style="display:inline-block;transform:scaleX(0.78)">32</span></div>
<div class="cell" style="left:78px;top:383px;width:37px;height:16px;background:#d00060"></div>
<div class="cell" style="left:78px;top:383px;width:37px;height:16px;color:#ffff00;text-align:center;font-size:14px;line-height:16px;">кра...</div>
<div class="cell" style="left:116px;top:383px;width:36px;height:16px;background:#ffff9f"></div>
<div class="cell" style="left:116px;top:383px;width:36px;height:16px;color:#000;text-align:center;font-size:14px;line-height:16px;">чет</div>
<div class="cell" style="left:153px;top:383px;width:38px;height:16px;background:#ff9966"></div>
<div class="cell" style="left:153px;top:383px;width:38px;height:16px;color:#000;text-align:center;font-size:14px;line-height:16px;"><span style="display:inline-block;transform:scaleX(0.88)">19-36</span></div>
<div class="cell" style="left:192px;top:383px;width:37px;height:16px;background:#ff66ff"></div>
<div class="cell" style="left:192px;top:383px;width:37px;height:16px;color:#000;text-align:center;font-size:14px;line-height:16px;">3д...</div>
<div class="cell" style="left:230px;top:383px;width:38px;height:16px;background:#00ee00"></div>
<div class="cell" style="left:230px;top:383px;width:38px;height:16px;color:#000;text-align:center;font-size:14px;line-height:16px;">2кол</div>
<div class="cell" style="left:269px;top:383px;width:37px;height:16px;background:#66ff33"></div>
<div class="cell" style="left:269px;top:383px;width:37px;height:16px;color:#000;text-align:center;font-size:14px;line-height:16px;">6six</div>
<div class="cell" style="left:307px;top:383px;width:38px;height:16px;background:#99ffcc"></div>
<div class="cell" style="left:307px;top:383px;width:38px;height:16px;color:#000;text-align:left;padding-left:3px;font-size:14px;line-height:16px;">VdZ...</div>
<div class="cell" style="left:346px;top:383px;width:58px;height:16px;background:#cc66cc"></div>
<div class="cell" style="left:346px;top:383px;width:58px;height:16px;color:#000;text-align:left;padding-left:3px;font-size:14px;line-height:16px;">11str</div>
<div class="cell" style="left:10px;top:400px;width:28px;height:16px;background:#c0dcc0"></div>
<div class="cell" style="left:10px;top:400px;width:28px;height:16px;color:#000;text-align:center;font-size:14px;line-height:16px;"><span style="display:inline-block;transform:scaleX(0.78)">38</span></div>
<div class="cell" style="left:39px;top:400px;width:38px;height:16px;background:#ffff9f"></div>
<div class="cell" style="left:39px;top:400px;width:38px;height:16px;color:#000;text-align:center;font-size:14px;line-height:16px;"><span style="display:inline-block;transform:scaleX(0.78)">33</span></div>
<div class="cell" style="left:78px;top:400px;width:37px;height:16px;background:#000000"></div>
<div class="cell" style="left:78px;top:400px;width:37px;height:16px;color:#ffff00;text-align:center;font-size:14px;line-height:16px;">черн</div>
<div class="cell" style="left:116px;top:400px;width:36px;height:16px;background:#66ff33"></div>
<div class="cell" style="left:116px;top:400px;width:36px;height:16px;color:#000;text-align:center;font-size:14px;line-height:16px;">неч</div>
<div class="cell" style="left:153px;top:400px;width:38px;height:16px;background:#ff9966"></div>
<div class="cell" style="left:153px;top:400px;width:38px;height:16px;color:#000;text-align:center;font-size:14px;line-height:16px;"><span style="display:inline-block;transform:scaleX(0.88)">19-36</span></div>
<div class="cell" style="left:192px;top:400px;width:37px;height:16px;background:#ff66ff"></div>
<div class="cell" style="left:192px;top:400px;width:37px;height:16px;color:#000;text-align:center;font-size:14px;line-height:16px;">3д...</div>
<div class="cell" style="left:230px;top:400px;width:38px;height:16px;background:#ffff00"></div>
<div class="cell" style="left:230px;top:400px;width:38px;height:16px;color:#000;text-align:center;font-size:14px;line-height:16px;">3кол</div>
<div class="cell" style="left:269px;top:400px;width:37px;height:16px;background:#66ff33"></div>
<div class="cell" style="left:269px;top:400px;width:37px;height:16px;color:#000;text-align:center;font-size:14px;line-height:16px;">6six</div>
<div class="cell" style="left:307px;top:400px;width:38px;height:16px;background:#33ccff"></div>
<div class="cell" style="left:307px;top:400px;width:38px;height:16px;color:#000;text-align:left;padding-left:3px;font-size:14px;line-height:16px;">Tiers</div>
<div class="cell" style="left:346px;top:400px;width:58px;height:16px;background:#cc66cc"></div>
<div class="cell" style="left:346px;top:400px;width:58px;height:16px;color:#000;text-align:left;padding-left:3px;font-size:14px;line-height:16px;">11str</div>
<div class="cell" style="left:10px;top:417px;width:28px;height:16px;background:#c0dcc0"></div>
<div class="cell" style="left:10px;top:417px;width:28px;height:16px;color:#000;text-align:center;font-size:14px;line-height:16px;"><span style="display:inline-block;transform:scaleX(0.78)">37</span></div>
<div class="cell" style="left:39px;top:417px;width:38px;height:16px;background:#ffff9f"></div>
<div class="cell" style="left:39px;top:417px;width:38px;height:16px;color:#000;text-align:center;font-size:14px;line-height:16px;"><span style="display:inline-block;transform:scaleX(0.78)">20</span></div>
<div class="cell" style="left:78px;top:417px;width:37px;height:16px;background:#000000"></div>
<div class="cell" style="left:78px;top:417px;width:37px;height:16px;color:#ffff00;text-align:center;font-size:14px;line-height:16px;">черн</div>
<div class="cell" style="left:116px;top:417px;width:36px;height:16px;background:#ffff9f"></div>
<div class="cell" style="left:116px;top:417px;width:36px;height:16px;color:#000;text-align:center;font-size:14px;line-height:16px;">чет</div>
<div class="cell" style="left:153px;top:417px;width:38px;height:16px;background:#ff9966"></div>
<div class="cell" style="left:153px;top:417px;width:38px;height:16px;color:#000;text-align:center;font-size:14px;line-height:16px;"><span style="display:inline-block;transform:scaleX(0.88)">19-36</span></div>
<div class="cell" style="left:192px;top:417px;width:37px;height:16px;background:#ffff9f"></div>
<div class="cell" style="left:192px;top:417px;width:37px;height:16px;color:#000;text-align:center;font-size:14px;line-height:16px;">2д...</div>
<div class="cell" style="left:230px;top:417px;width:38px;height:16px;background:#00ee00"></div>
<div class="cell" style="left:230px;top:417px;width:38px;height:16px;color:#000;text-align:center;font-size:14px;line-height:16px;">2кол</div>
<div class="cell" style="left:269px;top:417px;width:37px;height:16px;background:#99ffcc"></div>
<div class="cell" style="left:269px;top:417px;width:37px;height:16px;color:#000;text-align:center;font-size:14px;line-height:16px;">4six</div>
<div class="cell" style="left:307px;top:417px;width:38px;height:16px;background:#ff9966"></div>
<div class="cell" style="left:307px;top:417px;width:38px;height:16px;color:#000;text-align:left;padding-left:3px;font-size:14px;line-height:16px;">Orph</div>
<div class="cell" style="left:346px;top:417px;width:58px;height:16px;background:#ffff00"></div>
<div class="cell" style="left:346px;top:417px;width:58px;height:16px;color:#000;text-align:left;padding-left:3px;font-size:14px;line-height:16px;">7str</div>
<div class="cell" style="left:10px;top:434px;width:28px;height:16px;background:#c0dcc0"></div>
<div class="cell" style="left:10px;top:434px;width:28px;height:16px;color:#000;text-align:center;font-size:14px;line-height:16px;"><span style="display:inline-block;transform:scaleX(0.78)">36</span></div>
<div class="cell" style="left:39px;top:434px;width:38px;height:16px;background:#ffff9f"></div>
<div class="cell" style="left:39px;top:434px;width:38px;height:16px;color:#000;text-align:center;font-size:14px;line-height:16px;"><span style="display:inline-block;transform:scaleX(0.78)">5</span></div>
<div class="cell" style="left:78px;top:434px;width:37px;height:16px;background:#d00060"></div>
<div class="cell" style="left:78px;top:434px;width:37px;height:16px;color:#ffff00;text-align:center;font-size:14px;line-height:16px;">кра...</div>
<div class="cell" style="left:116px;top:434px;width:36px;height:16px;background:#66ff33"></div>
<div class="cell" style="left:116px;top:434px;width:36px;height:16px;color:#000;text-align:center;font-size:14px;line-height:16px;">неч</div>
<div class="cell" style="left:153px;top:434px;width:38px;height:16px;background:#99ffcc"></div>
<div class="cell" style="left:153px;top:434px;width:38px;height:16px;color:#000;text-align:center;font-size:14px;line-height:16px;"><span style="display:inline-block;transform:scaleX(0.86)">1-18</span></div>
<div class="cell" style="left:192px;top:434px;width:37px;height:16px;background:#33ccff"></div>
<div class="cell" style="left:192px;top:434px;width:37px;height:16px;color:#000;text-align:center;font-size:14px;line-height:16px;">1д...</div>
<div class="cell" style="left:230px;top:434px;width:38px;height:16px;background:#00ee00"></div>
<div class="cell" style="left:230px;top:434px;width:38px;height:16px;color:#000;text-align:center;font-size:14px;line-height:16px;">2кол</div>
<div class="cell" style="left:269px;top:434px;width:37px;height:16px;background:#33ccff"></div>
<div class="cell" style="left:269px;top:434px;width:37px;height:16px;color:#000;text-align:center;font-size:14px;line-height:16px;">1six</div>
<div class="cell" style="left:307px;top:434px;width:38px;height:16px;background:#33ccff"></div>
<div class="cell" style="left:307px;top:434px;width:38px;height:16px;color:#000;text-align:left;padding-left:3px;font-size:14px;line-height:16px;">Tiers</div>
<div class="cell" style="left:346px;top:434px;width:58px;height:16px;background:#66ff33"></div>
<div class="cell" style="left:346px;top:434px;width:58px;height:16px;color:#000;text-align:left;padding-left:3px;font-size:14px;line-height:16px;">2str</div>
<div class="cell" style="left:10px;top:451px;width:28px;height:16px;background:#c0dcc0"></div>
<div class="cell" style="left:10px;top:451px;width:28px;height:16px;color:#000;text-align:center;font-size:14px;line-height:16px;"><span style="display:inline-block;transform:scaleX(0.78)">35</span></div>
<div class="cell" style="left:39px;top:451px;width:38px;height:16px;background:#ffff9f"></div>
<div class="cell" style="left:39px;top:451px;width:38px;height:16px;color:#000;text-align:center;font-size:14px;line-height:16px;"><span style="display:inline-block;transform:scaleX(0.78)">12</span></div>
<div class="cell" style="left:78px;top:451px;width:37px;height:16px;background:#d00060"></div>
<div class="cell" style="left:78px;top:451px;width:37px;height:16px;color:#ffff00;text-align:center;font-size:14px;line-height:16px;">кра...</div>
<div class="cell" style="left:116px;top:451px;width:36px;height:16px;background:#ffff9f"></div>
<div class="cell" style="left:116px;top:451px;width:36px;height:16px;color:#000;text-align:center;font-size:14px;line-height:16px;">чет</div>
<div class="cell" style="left:153px;top:451px;width:38px;height:16px;background:#99ffcc"></div>
<div class="cell" style="left:153px;top:451px;width:38px;height:16px;color:#000;text-align:center;font-size:14px;line-height:16px;"><span style="display:inline-block;transform:scaleX(0.86)">1-18</span></div>
<div class="cell" style="left:192px;top:451px;width:37px;height:16px;background:#33ccff"></div>
<div class="cell" style="left:192px;top:451px;width:37px;height:16px;color:#000;text-align:center;font-size:14px;line-height:16px;">1д...</div>
<div class="cell" style="left:230px;top:451px;width:38px;height:16px;background:#ffff00"></div>
<div class="cell" style="left:230px;top:451px;width:38px;height:16px;color:#000;text-align:center;font-size:14px;line-height:16px;">3кол</div>
<div class="cell" style="left:269px;top:451px;width:37px;height:16px;background:#cc6600"></div>
<div class="cell" style="left:269px;top:451px;width:37px;height:16px;color:#000;text-align:center;font-size:14px;line-height:16px;">2six</div>
<div class="cell" style="left:307px;top:451px;width:38px;height:16px;background:#99ffcc"></div>
<div class="cell" style="left:307px;top:451px;width:38px;height:16px;color:#000;text-align:left;padding-left:3px;font-size:14px;line-height:16px;">VdZ...</div>
<div class="cell" style="left:346px;top:451px;width:58px;height:16px;background:#ff0000"></div>
<div class="cell" style="left:346px;top:451px;width:58px;height:16px;color:#000;text-align:left;padding-left:3px;font-size:14px;line-height:16px;">4str</div>
<div class="cell" style="left:10px;top:468px;width:28px;height:16px;background:#c0dcc0"></div>
<div class="cell" style="left:10px;top:468px;width:28px;height:16px;color:#000;text-align:center;font-size:14px;line-height:16px;"><span style="display:inline-block;transform:scaleX(0.78)">34</span></div>
<div class="cell" style="left:39px;top:468px;width:38px;height:16px;background:#ffff9f"></div>
<div class="cell" style="left:39px;top:468px;width:38px;height:16px;color:#000;text-align:center;font-size:14px;line-height:16px;"><span style="display:inline-block;transform:scaleX(0.78)">28</span></div>
<div class="cell" style="left:78px;top:468px;width:37px;height:16px;background:#000000"></div>
<div class="cell" style="left:78px;top:468px;width:37px;height:16px;color:#ffff00;text-align:center;font-size:14px;line-height:16px;">черн</div>
<div class="cell" style="left:116px;top:468px;width:36px;height:16px;background:#ffff9f"></div>
<div class="cell" style="left:116px;top:468px;width:36px;height:16px;color:#000;text-align:center;font-size:14px;line-height:16px;">чет</div>
<div class="cell" style="left:153px;top:468px;width:38px;height:16px;background:#ff9966"></div>
<div class="cell" style="left:153px;top:468px;width:38px;height:16px;color:#000;text-align:center;font-size:14px;line-height:16px;"><span style="display:inline-block;transform:scaleX(0.88)">19-36</span></div>
<div class="cell" style="left:192px;top:468px;width:37px;height:16px;background:#ff66ff"></div>
<div class="cell" style="left:192px;top:468px;width:37px;height:16px;color:#000;text-align:center;font-size:14px;line-height:16px;">3д...</div>
<div class="cell" style="left:230px;top:468px;width:38px;height:16px;background:#ff00ff"></div>
<div class="cell" style="left:230px;top:468px;width:38px;height:16px;color:#000;text-align:center;font-size:14px;line-height:16px;">1кол</div>
<div class="cell" style="left:269px;top:468px;width:37px;height:16px;background:#ffff9f"></div>
<div class="cell" style="left:269px;top:468px;width:37px;height:16px;color:#000;text-align:center;font-size:14px;line-height:16px;">5six</div>
<div class="cell" style="left:307px;top:468px;width:38px;height:16px;background:#66ff33"></div>
<div class="cell" style="left:307px;top:468px;width:38px;height:16px;color:#000;text-align:left;padding-left:3px;font-size:14px;line-height:16px;">VdZ</div>
<div class="cell" style="left:346px;top:468px;width:58px;height:16px;background:#33cc99"></div>
<div class="cell" style="left:346px;top:468px;width:58px;height:16px;color:#000;text-align:left;padding-left:3px;font-size:14px;line-height:16px;">10str</div>
<div class="cell" style="left:10px;top:485px;width:28px;height:16px;background:#c0dcc0"></div>
<div class="cell" style="left:10px;top:485px;width:28px;height:16px;color:#000;text-align:center;font-size:14px;line-height:16px;"><span style="display:inline-block;transform:scaleX(0.78)">33</span></div>
<div class="cell" style="left:39px;top:485px;width:38px;height:16px;background:#ffff9f"></div>
<div class="cell" style="left:39px;top:485px;width:38px;height:16px;color:#000;text-align:center;font-size:14px;line-height:16px;"><span style="display:inline-block;transform:scaleX(0.78)">18</span></div>
<div class="cell" style="left:78px;top:485px;width:37px;height:16px;background:#d00060"></div>
<div class="cell" style="left:78px;top:485px;width:37px;height:16px;color:#ffff00;text-align:center;font-size:14px;line-height:16px;">кра...</div>
<div class="cell" style="left:116px;top:485px;width:36px;height:16px;background:#ffff9f"></div>
<div class="cell" style="left:116px;top:485px;width:36px;height:16px;color:#000;text-align:center;font-size:14px;line-height:16px;">чет</div>
<div class="cell" style="left:153px;top:485px;width:38px;height:16px;background:#99ffcc"></div>
<div class="cell" style="left:153px;top:485px;width:38px;height:16px;color:#000;text-align:center;font-size:14px;line-height:16px;"><span style="display:inline-block;transform:scaleX(0.86)">1-18</span></div>
<div class="cell" style="left:192px;top:485px;width:37px;height:16px;background:#ffff9f"></div>
<div class="cell" style="left:192px;top:485px;width:37px;height:16px;color:#000;text-align:center;font-size:14px;line-height:16px;">2д...</div>
<div class="cell" style="left:230px;top:485px;width:38px;height:16px;background:#ffff00"></div>
<div class="cell" style="left:230px;top:485px;width:38px;height:16px;color:#000;text-align:center;font-size:14px;line-height:16px;">3кол</div>
<div class="cell" style="left:269px;top:485px;width:37px;height:16px;background:#ff66ff"></div>
<div class="cell" style="left:269px;top:485px;width:37px;height:16px;color:#000;text-align:center;font-size:14px;line-height:16px;">3six</div>
<div class="cell" style="left:307px;top:485px;width:38px;height:16px;background:#66ff33"></div>
<div class="cell" style="left:307px;top:485px;width:38px;height:16px;color:#000;text-align:left;padding-left:3px;font-size:14px;line-height:16px;">VdZ</div>
<div class="cell" style="left:346px;top:485px;width:58px;height:16px;background:#cccc00"></div>
<div class="cell" style="left:346px;top:485px;width:58px;height:16px;color:#000;text-align:left;padding-left:3px;font-size:14px;line-height:16px;">6str</div>
<div style="left:405px;top:144px;width:17px;height:357px;background:#eaeaea;border-left:1px solid #f8f8f8"></div>
<svg style="position:absolute;left:410px;top:152px" width="8" height="5"><path d="M0 4.5H8L4 0.5Z" fill="#505050"/></svg>
<svg style="position:absolute;left:410px;top:491px" width="8" height="5"><path d="M0 0.5H8L4 4.5Z" fill="#505050"/></svg>
<div style="left:406px;top:163px;width:15px;height:122px;border:1px solid #9a9a9a;border-radius:2px;background:linear-gradient(90deg,#f4f4f4,#e4e4e4 50%,#d8d8d8)"></div>
<svg style="position:absolute;left:410px;top:220px" width="7" height="6"><path d="M0 0.5H7M0 2.5H7M0 4.5H7" stroke="#606060" stroke-width="1"/></svg>
<div style="left:9px;top:501px;width:414px;height:1px;background:#6aa2e0"></div>
<div style="left:8px;top:502px;width:417px;height:2px;background:#a0a0a0"></div>
<div style="left:8px;top:504px;width:417px;height:1px;background:#0a6ad6"></div>
<div style="left:8px;top:505px;width:417px;height:1px;background:#b9b9b9"></div>
<div style="left:8px;top:506px;width:417px;height:1px;background:#0a6ad6"></div>
<div style="left:422px;top:30px;width:3px;height:590px;background:#a0a0a0"></div>
<div style="left:9px;top:528px;width:413px;height:90px;border:1px solid #898c95;background:#fff"></div>
<div class="tab" style="left:86px;top:510px;width:123px;height:18px"></div>
<div class="t" style="left:91px;top:514px;">Автограббер номеров</div>
<div class="tab" style="left:208px;top:510px;width:141px;height:18px"></div>
<div class="t" style="left:214px;top:514px;">Настройки автограббера</div>
<div class="tab" style="left:349px;top:510px;width:40px;height:18px"></div>
<div class="t" style="left:355px;top:514px;">Бот</div>
<div class="tabon" style="left:9px;top:508px;width:78px;height:21px"></div>
<div class="t" style="left:18px;top:512px;">Ручной ввод</div>
<div style="left:14px;top:563px;width:25px;height:25px;background:#008000;overflow:hidden"><div style="left:-1px;top:-1px;width:27px;height:27px;border-radius:50%;background:#0000ff"></div><div style="left:3px;top:3px;width:19px;height:19px;border-radius:50%;background:#22dd55"></div><div class="t" style="left:0;top:5px;width:25px;text-align:center;color:#ffff00;font-size:14px;line-height:14px"><span style="display:inline-block;transform:scaleX(0.85)">0</span></div></div>
<div style="left:41px;top:536px;width:25px;height:25px;background:#008000;overflow:hidden"><div style="left:-1px;top:-1px;width:27px;height:27px;border-radius:50%;background:#0000ff"></div><div style="left:3px;top:3px;width:19px;height:19px;border-radius:50%;background:#ff0000"></div><div class="t" style="left:0;top:5px;width:25px;text-align:center;color:#ffff00;font-size:14px;line-height:14px"><span style="display:inline-block;transform:scaleX(0.85)">3</span></div></div>
<div style="left:41px;top:563px;width:25px;height:25px;background:#008000;overflow:hidden"><div style="left:-1px;top:-1px;width:27px;height:27px;border-radius:50%;background:#0000ff"></div><div style="left:3px;top:3px;width:19px;height:19px;border-radius:50%;background:#000000"></div><div class="t" style="left:0;top:5px;width:25px;text-align:center;color:#ffff00;font-size:14px;line-height:14px"><span style="display:inline-block;transform:scaleX(0.85)">2</span></div></div>
<div style="left:41px;top:590px;width:25px;height:25px;background:#008000;overflow:hidden"><div style="left:-1px;top:-1px;width:27px;height:27px;border-radius:50%;background:#0000ff"></div><div style="left:3px;top:3px;width:19px;height:19px;border-radius:50%;background:#ff0000"></div><div class="t" style="left:0;top:5px;width:25px;text-align:center;color:#ffff00;font-size:14px;line-height:14px"><span style="display:inline-block;transform:scaleX(0.85)">1</span></div></div>
<div style="left:68px;top:536px;width:25px;height:25px;background:#008000;overflow:hidden"><div style="left:-1px;top:-1px;width:27px;height:27px;border-radius:50%;background:#0000ff"></div><div style="left:3px;top:3px;width:19px;height:19px;border-radius:50%;background:#000000"></div><div class="t" style="left:0;top:5px;width:25px;text-align:center;color:#ffff00;font-size:14px;line-height:14px"><span style="display:inline-block;transform:scaleX(0.85)">6</span></div></div>
<div style="left:68px;top:563px;width:25px;height:25px;background:#008000;overflow:hidden"><div style="left:-1px;top:-1px;width:27px;height:27px;border-radius:50%;background:#0000ff"></div><div style="left:3px;top:3px;width:19px;height:19px;border-radius:50%;background:#ff0000"></div><div class="t" style="left:0;top:5px;width:25px;text-align:center;color:#ffff00;font-size:14px;line-height:14px"><span style="display:inline-block;transform:scaleX(0.85)">5</span></div></div>
<div style="left:68px;top:590px;width:25px;height:25px;background:#008000;overflow:hidden"><div style="left:-1px;top:-1px;width:27px;height:27px;border-radius:50%;background:#0000ff"></div><div style="left:3px;top:3px;width:19px;height:19px;border-radius:50%;background:#000000"></div><div class="t" style="left:0;top:5px;width:25px;text-align:center;color:#ffff00;font-size:14px;line-height:14px"><span style="display:inline-block;transform:scaleX(0.85)">4</span></div></div>
<div style="left:95px;top:536px;width:25px;height:25px;background:#008000;overflow:hidden"><div style="left:-1px;top:-1px;width:27px;height:27px;border-radius:50%;background:#0000ff"></div><div style="left:3px;top:3px;width:19px;height:19px;border-radius:50%;background:#ff0000"></div><div class="t" style="left:0;top:5px;width:25px;text-align:center;color:#ffff00;font-size:14px;line-height:14px"><span style="display:inline-block;transform:scaleX(0.85)">9</span></div></div>
<div style="left:95px;top:563px;width:25px;height:25px;background:#008000;overflow:hidden"><div style="left:-1px;top:-1px;width:27px;height:27px;border-radius:50%;background:#0000ff"></div><div style="left:3px;top:3px;width:19px;height:19px;border-radius:50%;background:#000000"></div><div class="t" style="left:0;top:5px;width:25px;text-align:center;color:#ffff00;font-size:14px;line-height:14px"><span style="display:inline-block;transform:scaleX(0.85)">8</span></div></div>
<div style="left:95px;top:590px;width:25px;height:25px;background:#008000;overflow:hidden"><div style="left:-1px;top:-1px;width:27px;height:27px;border-radius:50%;background:#0000ff"></div><div style="left:3px;top:3px;width:19px;height:19px;border-radius:50%;background:#ff0000"></div><div class="t" style="left:0;top:5px;width:25px;text-align:center;color:#ffff00;font-size:14px;line-height:14px"><span style="display:inline-block;transform:scaleX(0.85)">7</span></div></div>
<div style="left:122px;top:536px;width:25px;height:25px;background:#008000;overflow:hidden"><div style="left:-1px;top:-1px;width:27px;height:27px;border-radius:50%;background:#0000ff"></div><div style="left:3px;top:3px;width:19px;height:19px;border-radius:50%;background:#ff0000"></div><div class="t" style="left:0;top:5px;width:25px;text-align:center;color:#ffff00;font-size:14px;line-height:14px"><span style="display:inline-block;transform:scaleX(0.85)">12</span></div></div>
<div style="left:122px;top:563px;width:25px;height:25px;background:#008000;overflow:hidden"><div style="left:-1px;top:-1px;width:27px;height:27px;border-radius:50%;background:#0000ff"></div><div style="left:3px;top:3px;width:19px;height:19px;border-radius:50%;background:#000000"></div><div class="t" style="left:0;top:5px;width:25px;text-align:center;color:#ffff00;font-size:14px;line-height:14px"><span style="display:inline-block;transform:scaleX(0.85)">11</span></div></div>
<div style="left:122px;top:590px;width:25px;height:25px;background:#008000;overflow:hidden"><div style="left:-1px;top:-1px;width:27px;height:27px;border-radius:50%;background:#0000ff"></div><div style="left:3px;top:3px;width:19px;height:19px;border-radius:50%;background:#000000"></div><div class="t" style="left:0;top:5px;width:25px;text-align:center;color:#ffff00;font-size:14px;line-height:14px"><span style="display:inline-block;transform:scaleX(0.85)">10</span></div></div>
<div style="left:149px;top:536px;width:25px;height:25px;background:#008000;overflow:hidden"><div style="left:-1px;top:-1px;width:27px;height:27px;border-radius:50%;background:#0000ff"></div><div style="left:3px;top:3px;width:19px;height:19px;border-radius:50%;background:#000000"></div><div class="t" style="left:0;top:5px;width:25px;text-align:center;color:#ffff00;font-size:14px;line-height:14px"><span style="display:inline-block;transform:scaleX(0.85)">15</span></div></div>
<div style="left:149px;top:563px;width:25px;height:25px;background:#008000;overflow:hidden"><div style="left:-1px;top:-1px;width:27px;height:27px;border-radius:50%;background:#0000ff"></div><div style="left:3px;top:3px;width:19px;height:19px;border-radius:50%;background:#ff0000"></div><div class="t" style="left:0;top:5px;width:25px;text-align:center;color:#ffff00;font-size:14px;line-height:14px"><span style="display:inline-block;transform:scaleX(0.85)">14</span></div></div>
<div style="left:149px;top:590px;width:25px;height:25px;background:#008000;overflow:hidden"><div style="left:-1px;top:-1px;width:27px;height:27px;border-radius:50%;background:#0000ff"></div><div style="left:3px;top:3px;width:19px;height:19px;border-radius:50%;background:#000000"></div><div class="t" style="left:0;top:5px;width:25px;text-align:center;color:#ffff00;font-size:14px;line-height:14px"><span style="display:inline-block;transform:scaleX(0.85)">13</span></div></div>
<div style="left:176px;top:536px;width:25px;height:25px;background:#008000;overflow:hidden"><div style="left:-1px;top:-1px;width:27px;height:27px;border-radius:50%;background:#0000ff"></div><div style="left:3px;top:3px;width:19px;height:19px;border-radius:50%;background:#ff0000"></div><div class="t" style="left:0;top:5px;width:25px;text-align:center;color:#ffff00;font-size:14px;line-height:14px"><span style="display:inline-block;transform:scaleX(0.85)">18</span></div></div>
<div style="left:176px;top:563px;width:25px;height:25px;background:#008000;overflow:hidden"><div style="left:-1px;top:-1px;width:27px;height:27px;border-radius:50%;background:#0000ff"></div><div style="left:3px;top:3px;width:19px;height:19px;border-radius:50%;background:#000000"></div><div class="t" style="left:0;top:5px;width:25px;text-align:center;color:#ffff00;font-size:14px;line-height:14px"><span style="display:inline-block;transform:scaleX(0.85)">17</span></div></div>
<div style="left:176px;top:590px;width:25px;height:25px;background:#008000;overflow:hidden"><div style="left:-1px;top:-1px;width:27px;height:27px;border-radius:50%;background:#0000ff"></div><div style="left:3px;top:3px;width:19px;height:19px;border-radius:50%;background:#ff0000"></div><div class="t" style="left:0;top:5px;width:25px;text-align:center;color:#ffff00;font-size:14px;line-height:14px"><span style="display:inline-block;transform:scaleX(0.85)">16</span></div></div>
<div style="left:203px;top:536px;width:25px;height:25px;background:#008000;overflow:hidden"><div style="left:-1px;top:-1px;width:27px;height:27px;border-radius:50%;background:#0000ff"></div><div style="left:3px;top:3px;width:19px;height:19px;border-radius:50%;background:#ff0000"></div><div class="t" style="left:0;top:5px;width:25px;text-align:center;color:#ffff00;font-size:14px;line-height:14px"><span style="display:inline-block;transform:scaleX(0.85)">21</span></div></div>
<div style="left:203px;top:563px;width:25px;height:25px;background:#008000;overflow:hidden"><div style="left:-1px;top:-1px;width:27px;height:27px;border-radius:50%;background:#0000ff"></div><div style="left:3px;top:3px;width:19px;height:19px;border-radius:50%;background:#000000"></div><div class="t" style="left:0;top:5px;width:25px;text-align:center;color:#ffff00;font-size:14px;line-height:14px"><span style="display:inline-block;transform:scaleX(0.85)">20</span></div></div>
<div style="left:203px;top:590px;width:25px;height:25px;background:#008000;overflow:hidden"><div style="left:-1px;top:-1px;width:27px;height:27px;border-radius:50%;background:#0000ff"></div><div style="left:3px;top:3px;width:19px;height:19px;border-radius:50%;background:#ff0000"></div><div class="t" style="left:0;top:5px;width:25px;text-align:center;color:#ffff00;font-size:14px;line-height:14px"><span style="display:inline-block;transform:scaleX(0.85)">19</span></div></div>
<div style="left:230px;top:536px;width:25px;height:25px;background:#008000;overflow:hidden"><div style="left:-1px;top:-1px;width:27px;height:27px;border-radius:50%;background:#0000ff"></div><div style="left:3px;top:3px;width:19px;height:19px;border-radius:50%;background:#000000"></div><div class="t" style="left:0;top:5px;width:25px;text-align:center;color:#ffff00;font-size:14px;line-height:14px"><span style="display:inline-block;transform:scaleX(0.85)">24</span></div></div>
<div style="left:230px;top:563px;width:25px;height:25px;background:#008000;overflow:hidden"><div style="left:-1px;top:-1px;width:27px;height:27px;border-radius:50%;background:#0000ff"></div><div style="left:3px;top:3px;width:19px;height:19px;border-radius:50%;background:#ff0000"></div><div class="t" style="left:0;top:5px;width:25px;text-align:center;color:#ffff00;font-size:14px;line-height:14px"><span style="display:inline-block;transform:scaleX(0.85)">23</span></div></div>
<div style="left:230px;top:590px;width:25px;height:25px;background:#008000;overflow:hidden"><div style="left:-1px;top:-1px;width:27px;height:27px;border-radius:50%;background:#0000ff"></div><div style="left:3px;top:3px;width:19px;height:19px;border-radius:50%;background:#000000"></div><div class="t" style="left:0;top:5px;width:25px;text-align:center;color:#ffff00;font-size:14px;line-height:14px"><span style="display:inline-block;transform:scaleX(0.85)">22</span></div></div>
<div style="left:257px;top:536px;width:25px;height:25px;background:#008000;overflow:hidden"><div style="left:-1px;top:-1px;width:27px;height:27px;border-radius:50%;background:#0000ff"></div><div style="left:3px;top:3px;width:19px;height:19px;border-radius:50%;background:#ff0000"></div><div class="t" style="left:0;top:5px;width:25px;text-align:center;color:#ffff00;font-size:14px;line-height:14px"><span style="display:inline-block;transform:scaleX(0.85)">27</span></div></div>
<div style="left:257px;top:563px;width:25px;height:25px;background:#008000;overflow:hidden"><div style="left:-1px;top:-1px;width:27px;height:27px;border-radius:50%;background:#0000ff"></div><div style="left:3px;top:3px;width:19px;height:19px;border-radius:50%;background:#000000"></div><div class="t" style="left:0;top:5px;width:25px;text-align:center;color:#ffff00;font-size:14px;line-height:14px"><span style="display:inline-block;transform:scaleX(0.85)">26</span></div></div>
<div style="left:257px;top:590px;width:25px;height:25px;background:#008000;overflow:hidden"><div style="left:-1px;top:-1px;width:27px;height:27px;border-radius:50%;background:#0000ff"></div><div style="left:3px;top:3px;width:19px;height:19px;border-radius:50%;background:#ff0000"></div><div class="t" style="left:0;top:5px;width:25px;text-align:center;color:#ffff00;font-size:14px;line-height:14px"><span style="display:inline-block;transform:scaleX(0.85)">25</span></div></div>
<div style="left:284px;top:536px;width:25px;height:25px;background:#008000;overflow:hidden"><div style="left:-1px;top:-1px;width:27px;height:27px;border-radius:50%;background:#0000ff"></div><div style="left:3px;top:3px;width:19px;height:19px;border-radius:50%;background:#ff0000"></div><div class="t" style="left:0;top:5px;width:25px;text-align:center;color:#ffff00;font-size:14px;line-height:14px"><span style="display:inline-block;transform:scaleX(0.85)">30</span></div></div>
<div style="left:284px;top:563px;width:25px;height:25px;background:#008000;overflow:hidden"><div style="left:-1px;top:-1px;width:27px;height:27px;border-radius:50%;background:#0000ff"></div><div style="left:3px;top:3px;width:19px;height:19px;border-radius:50%;background:#000000"></div><div class="t" style="left:0;top:5px;width:25px;text-align:center;color:#ffff00;font-size:14px;line-height:14px"><span style="display:inline-block;transform:scaleX(0.85)">29</span></div></div>
<div style="left:284px;top:590px;width:25px;height:25px;background:#008000;overflow:hidden"><div style="left:-1px;top:-1px;width:27px;height:27px;border-radius:50%;background:#0000ff"></div><div style="left:3px;top:3px;width:19px;height:19px;border-radius:50%;background:#000000"></div><div class="t" style="left:0;top:5px;width:25px;text-align:center;color:#ffff00;font-size:14px;line-height:14px"><span style="display:inline-block;transform:scaleX(0.85)">28</span></div></div>
<div style="left:311px;top:536px;width:25px;height:25px;background:#008000;overflow:hidden"><div style="left:-1px;top:-1px;width:27px;height:27px;border-radius:50%;background:#0000ff"></div><div style="left:3px;top:3px;width:19px;height:19px;border-radius:50%;background:#000000"></div><div class="t" style="left:0;top:5px;width:25px;text-align:center;color:#ffff00;font-size:14px;line-height:14px"><span style="display:inline-block;transform:scaleX(0.85)">33</span></div></div>
<div style="left:311px;top:563px;width:25px;height:25px;background:#008000;overflow:hidden"><div style="left:-1px;top:-1px;width:27px;height:27px;border-radius:50%;background:#0000ff"></div><div style="left:3px;top:3px;width:19px;height:19px;border-radius:50%;background:#ff0000"></div><div class="t" style="left:0;top:5px;width:25px;text-align:center;color:#ffff00;font-size:14px;line-height:14px"><span style="display:inline-block;transform:scaleX(0.85)">32</span></div></div>
<div style="left:311px;top:590px;width:25px;height:25px;background:#008000;overflow:hidden"><div style="left:-1px;top:-1px;width:27px;height:27px;border-radius:50%;background:#0000ff"></div><div style="left:3px;top:3px;width:19px;height:19px;border-radius:50%;background:#000000"></div><div class="t" style="left:0;top:5px;width:25px;text-align:center;color:#ffff00;font-size:14px;line-height:14px"><span style="display:inline-block;transform:scaleX(0.85)">31</span></div></div>
<div style="left:338px;top:536px;width:25px;height:25px;background:#008000;overflow:hidden"><div style="left:-1px;top:-1px;width:27px;height:27px;border-radius:50%;background:#0000ff"></div><div style="left:3px;top:3px;width:19px;height:19px;border-radius:50%;background:#ff0000"></div><div class="t" style="left:0;top:5px;width:25px;text-align:center;color:#ffff00;font-size:14px;line-height:14px"><span style="display:inline-block;transform:scaleX(0.85)">36</span></div></div>
<div style="left:338px;top:563px;width:25px;height:25px;background:#008000;overflow:hidden"><div style="left:-1px;top:-1px;width:27px;height:27px;border-radius:50%;background:#0000ff"></div><div style="left:3px;top:3px;width:19px;height:19px;border-radius:50%;background:#000000"></div><div class="t" style="left:0;top:5px;width:25px;text-align:center;color:#ffff00;font-size:14px;line-height:14px"><span style="display:inline-block;transform:scaleX(0.85)">35</span></div></div>
<div style="left:338px;top:590px;width:25px;height:25px;background:#008000;overflow:hidden"><div style="left:-1px;top:-1px;width:27px;height:27px;border-radius:50%;background:#0000ff"></div><div style="left:3px;top:3px;width:19px;height:19px;border-radius:50%;background:#ff0000"></div><div class="t" style="left:0;top:5px;width:25px;text-align:center;color:#ffff00;font-size:14px;line-height:14px"><span style="display:inline-block;transform:scaleX(0.85)">34</span></div></div>
<div style="left:8px;top:619px;width:960px;height:30px;background:#efebeb;border-top:2px solid #a0a0a0"></div>
<div class="t" style="left:10px;top:629px;font-size:12px;line-height:14px">В последнем спине выпало: 9 красное</div>
<div style="left:707px;top:621px;width:1px;height:28px;background:#d8d4d4"></div>
<div style="left:828px;top:621px;width:1px;height:28px;background:#d8d4d4"></div>
<div class="t" style="left:712px;top:629px;font-size:12px;line-height:14px">Автосмещение : 7</div>
<div class="t" style="left:832px;top:629px;font-size:12px;line-height:14px">Исходное: 4</div>
<svg style="position:absolute;left:955px;top:637px" width="11" height="11"><rect x="8" y="0" width="2" height="2" fill="#b8b4b4"/><rect x="5" y="3" width="2" height="2" fill="#b8b4b4"/><rect x="8" y="3" width="2" height="2" fill="#b8b4b4"/><rect x="2" y="6" width="2" height="2" fill="#b8b4b4"/><rect x="5" y="6" width="2" height="2" fill="#b8b4b4"/><rect x="8" y="6" width="2" height="2" fill="#b8b4b4"/></svg>
<div style="left:422px;top:143px;width:1px;height:359px;background:#6aa2e0"></div>
<div style="left:423px;top:30px;width:2px;height:472px;background:#a0a0a0"></div>
<div style="left:423px;top:507px;width:2px;height:112px;background:#a0a0a0"></div>
<div style="left:425px;top:30px;width:2px;height:589px;background:#ffffff"></div>
<div style="left:427px;top:52px;width:537px;height:397px;border:1px solid #898c95;background:#fff"></div>
<div class="tab" style="left:429px;top:35px;width:71px;height:17px"></div>
<div class="t" style="left:435px;top:38px;">Анализатор</div>
<div class="tab" style="left:573px;top:35px;width:56px;height:17px"></div>
<div class="t" style="left:579px;top:38px;">Частоты</div>
<div class="tab" style="left:628px;top:35px;width:131px;height:17px"></div>
<div class="t" style="left:634px;top:38px;">Функционал PsevdoMS</div>
<div class="tab" style="left:758px;top:35px;width:118px;height:17px"></div>
<div class="t" style="left:764px;top:38px;">Контроль банкролла</div>
<div style="left:875px;top:35px;width:58px;height:17px;overflow:hidden"><div class="tab" style="left:0;top:0;width:80px;height:17px"></div><div class="t" style="left:6px;top:3px">Колесо рулетки</div></div>
<div style="left:499px;top:32px;width:75px;height:21px;border:1px solid #898c95;border-bottom:none;background:#fff"></div>
<div class="t" style="left:507px;top:36px;">Автоставки</div>
<div style="left:933px;top:34px;width:16px;height:16px;border:1px solid #a7a7a7;background:linear-gradient(#f3f3f3,#dedede)"></div>
<svg style="position:absolute;left:939px;top:38px" width="4" height="7"><path d="M3.5 0.5 L0.5 3.5 L3.5 6.5Z" fill="#4866c8"/></svg>
<div style="left:949px;top:34px;width:16px;height:16px;border:1px solid #a7a7a7;background:linear-gradient(#f3f3f3,#dedede)"></div>
<svg style="position:absolute;left:955px;top:38px" width="4" height="7"><path d="M0.5 0.5 L3.5 3.5 L0.5 6.5Z" fill="#4866c8"/></svg>
<div style="left:428px;top:56px;width:535px;height:2px;background:#eeeeee"></div>
<div style="left:434px;top:79px;width:523px;height:363px;border:1px solid #a0a0a0;background:#fff"></div>
<div class="tab" style="left:436px;top:61px;width:85px;height:18px"></div>
<div class="t" style="left:442px;top:64px;">Общие ставки</div>
<div class="tab" style="left:520px;top:61px;width:43px;height:18px"></div>
<div class="t" style="left:526px;top:64px;">ПНС</div>
<div class="tab" style="left:563px;top:61px;width:91px;height:18px"></div>
<div class="t" style="left:569px;top:64px;">Дополнительно</div>
<div style="left:653px;top:59px;width:46px;height:21px;border:1px solid #898c95;border-bottom:none;background:#fff"></div>
<div class="t" style="left:661px;top:63px;">Спец</div>
<div style="left:438px;top:83px;width:516px;height:354px;border-top:2px solid #a0a0a0;border-left:1px solid #a0a0a0;border-right:2px solid #a0a0a0;background:#f0f0f0"></div>
<div style="left:439px;top:84px;width:163px;height:352px;border-top:2px solid #6d6d6d;border-left:2px solid #6d6d6d;border-bottom:1px solid #d0d0d0;background:#fff"></div>
<div style="left:441px;top:86px;width:143px;height:18px;background:linear-gradient(#ffffff,#f7f8fa)"></div>
<div style="left:497px;top:88px;width:1px;height:15px;background:#e3e4e6"></div>
<div class="t" style="left:444px;top:89px;">Номер</div>
<div class="t" style="left:501px;top:89px;">Ставка</div>
<div style="left:441px;top:104px;width:143px;height:331px;background:#8ca5d8;overflow:hidden"><div style="left:1px;top:1px;width:56px;height:16px;background:#a6caf0"></div><div style="left:58px;top:1px;width:84px;height:16px;background:#c0dcc0"></div><div class="t" style="left:4px;top:3px">0</div><div class="t" style="left:61px;top:3px">0</div><div style="left:1px;top:18px;width:56px;height:16px;background:#a6caf0"></div><div style="left:58px;top:18px;width:84px;height:16px;background:#c0dcc0"></div><div class="t" style="left:4px;top:20px">1</div><div class="t" style="left:61px;top:20px">1</div><div style="left:1px;top:35px;width:56px;height:16px;background:#a6caf0"></div><div style="left:58px;top:35px;width:84px;height:16px;background:#c0dcc0"></div><div class="t" style="left:4px;top:37px">2</div><div class="t" style="left:61px;top:37px">4</div><div style="left:1px;top:52px;width:56px;height:16px;background:#a6caf0"></div><div style="left:58px;top:52px;width:84px;height:16px;background:#c0dcc0"></div><div class="t" style="left:4px;top:54px">3</div><div class="t" style="left:61px;top:54px">2</div><div style="left:1px;top:69px;width:56px;height:16px;background:#a6caf0"></div><div style="left:58px;top:69px;width:84px;height:16px;background:#c0dcc0"></div><div class="t" style="left:4px;top:71px">4</div><div class="t" style="left:61px;top:71px">2</div><div style="left:1px;top:86px;width:56px;height:16px;background:#a6caf0"></div><div style="left:58px;top:86px;width:84px;height:16px;background:#c0dcc0"></div><div class="t" style="left:4px;top:88px">5</div><div class="t" style="left:61px;top:88px">6</div><div style="left:1px;top:103px;width:56px;height:16px;background:#a6caf0"></div><div style="left:58px;top:103px;width:84px;height:16px;background:#c0dcc0"></div><div class="t" style="left:4px;top:105px">6</div><div class="t" style="left:61px;top:105px">1</div><div style="left:1px;top:120px;width:56px;height:16px;background:#a6caf0"></div><div style="left:58px;top:120px;width:84px;height:16px;background:#c0dcc0"></div><div class="t" style="left:4px;top:122px">7</div><div class="t" style="left:61px;top:122px">0</div><div style="left:1px;top:137px;width:56px;height:16px;background:#a6caf0"></div><div style="left:58px;top:137px;width:84px;height:16px;background:#c0dcc0"></div><div class="t" style="left:4px;top:139px">8</div><div class="t" style="left:61px;top:139px">7</div><div style="left:1px;top:154px;width:56px;height:16px;background:#a6caf0"></div><div style="left:58px;top:154px;width:84px;height:16px;background:#c0dcc0"></div><div class="t" style="left:4px;top:156px">9</div><div class="t" style="left:61px;top:156px">7</div><div style="left:1px;top:171px;width:56px;height:16px;background:#a6caf0"></div><div style="left:58px;top:171px;width:84px;height:16px;background:#c0dcc0"></div><div class="t" style="left:4px;top:173px">10</div><div class="t" style="left:61px;top:173px">7</div><div style="left:1px;top:188px;width:56px;height:16px;background:#a6caf0"></div><div style="left:58px;top:188px;width:84px;height:16px;background:#c0dcc0"></div><div class="t" style="left:4px;top:190px">11</div><div class="t" style="left:61px;top:190px">3</div><div style="left:1px;top:205px;width:56px;height:16px;background:#a6caf0"></div><div style="left:58px;top:205px;width:84px;height:16px;background:#c0dcc0"></div><div class="t" style="left:4px;top:207px">12</div><div class="t" style="left:61px;top:207px">9</div><div style="left:1px;top:222px;width:56px;height:16px;background:#a6caf0"></div><div style="left:58px;top:222px;width:84px;height:16px;background:#c0dcc0"></div><div class="t" style="left:4px;top:224px">13</div><div class="t" style="left:61px;top:224px">7</div><div style="left:1px;top:239px;width:56px;height:16px;background:#a6caf0"></div><div style="left:58px;top:239px;width:84px;height:16px;background:#c0dcc0"></div><div class="t" style="left:4px;top:241px">14</div><div class="t" style="left:61px;top:241px">4</div><div style="left:1px;top:256px;width:56px;height:16px;background:#a6caf0"></div><div style="left:58px;top:256px;width:84px;height:16px;background:#c0dcc0"></div><div class="t" style="left:4px;top:258px">15</div><div class="t" style="left:61px;top:258px">8</div><div style="left:1px;top:273px;width:56px;height:16px;background:#a6caf0"></div><div style="left:58px;top:273px;width:84px;height:16px;background:#c0dcc0"></div><div class="t" style="left:4px;top:275px">16</div><div class="t" style="left:61px;top:275px">2</div><div style="left:1px;top:290px;width:56px;height:16px;background:#a6caf0"></div><div style="left:58px;top:290px;width:84px;height:16px;background:#c0dcc0"></div><div class="t" style="left:4px;top:292px">17</div><div class="t" style="left:61px;top:292px">8</div><div style="left:1px;top:307px;width:56px;height:16px;background:#a6caf0"></div><div style="left:58px;top:307px;width:84px;height:16px;background:#c0dcc0"></div><div class="t" style="left:4px;top:309px">18</div><div class="t" style="left:61px;top:309px">9</div><div style="left:1px;top:324px;width:56px;height:16px;background:#a6caf0"></div><div style="left:58px;top:324px;width:84px;height:16px;background:#c0dcc0"></div><div class="t" style="left:4px;top:326px">19</div><div class="t" style="left:61px;top:326px">2</div></div>
<div style="left:584px;top:86px;width:17px;height:349px;background:#f0f0f0"></div>
<svg style="position:absolute;left:589px;top:92px" width="8" height="5"><path d="M0 4.5H8L4 0.5Z" fill="#505050"/></svg>
<svg style="position:absolute;left:589px;top:425px" width="8" height="5"><path d="M0 0.5H8L4 4.5Z" fill="#505050"/></svg>
<div style="left:585px;top:104px;width:15px;height:164px;border:1px solid #9a9a9a;border-radius:2px;background:linear-gradient(90deg,#f4f4f4,#e4e4e4 50%,#d8d8d8)"></div>
<svg style="position:absolute;left:589px;top:182px" width="7" height="6"><path d="M0 0.5H7M0 2.5H7M0 4.5H7" stroke="#606060" stroke-width="1"/></svg>
<div class="btn" style="left:607px;top:91px;width:105px;height:34px"></div>
<svg style="position:absolute;left:624px;top:98px" width="20" height="20" viewBox="0 0 20 20"><circle cx="10" cy="10" r="8" fill="#00ec44" stroke="#000" stroke-width="2"/><path d="M8 8 L12.5 4.5 L15 6.5 L12.5 9.5 L11 12.5 Z" fill="#2a30e0"/><path d="M5 11 L8 8.5 L13 11.5 L10.5 14.5 Z" fill="#f010c8"/></svg>
<div class="t" style="left:647px;top:95px;">Очистить</div>
<div class="t" style="left:651px;top:108px;">таблицу</div>
<div class="btn" style="left:607px;top:128px;width:105px;height:32px"></div>
<svg style="position:absolute;left:610px;top:134px" width="20" height="20" viewBox="0 0 20 20"><circle cx="10" cy="10" r="8" fill="#00ec44" stroke="#000" stroke-width="2"/><path d="M6 5.5 H9.5 M6.5 5.5 V10" stroke="#000" stroke-width="1.3" fill="none"/><path d="M14 6 Q13 5 12 5.6 Q11 6.4 11.2 8 Q11.6 9.8 14 9.3" stroke="#000" stroke-width="1.2" fill="none"/><path d="M7 11 V13.8 H10.5 M10.5 11 V16" stroke="#000" stroke-width="1.3" fill="none"/></svg>
<div class="t" style="left:643px;top:132px;">Случайный</div>
<div class="t" style="left:633px;top:145px;">размер ставки</div>
<div class="t" style="left:630px;top:167px;">MAX кол-во</div>
<div class="t" style="left:630px;top:179px;">фишек</div>
<div style="left:616px;top:192px;width:81px;height:32px;border:1px solid #c8c8c8;background:#fff"></div>
<div style="left:617px;top:193px;width:62px;height:30px;background:#c0dcc0"></div>
<div class="t" style="left:620px;top:197px;font-size:19px;line-height:22px;-webkit-text-stroke:0.5px #000"><span style="display:inline-block;transform:scaleX(0.84);transform-origin:0 0">10</span></div>
<div style="left:679px;top:194px;width:15px;height:14px;border:1px solid #c3c3c3;background:linear-gradient(#f6f6f6,#e2e2e2)"></div>
<svg style="position:absolute;left:683px;top:199px" width="7" height="4"><path d="M0 4H7L3.5 0Z" fill="#4d6fc0"/></svg>
<div style="left:679px;top:208px;width:15px;height:14px;border:1px solid #c3c3c3;background:linear-gradient(#f6f6f6,#e2e2e2)"></div>
<svg style="position:absolute;left:683px;top:213px" width="7" height="4"><path d="M0 0H7L3.5 4Z" fill="#4d6fc0"/></svg>
<div class="btn" style="left:607px;top:227px;width:105px;height:28px"></div>
<svg style="position:absolute;left:618px;top:231px" width="20" height="20" viewBox="0 0 20 20"><circle cx="10" cy="10" r="8" fill="#00ec44" stroke="#000" stroke-width="2"/><path d="M5 14.5 L7 5.5 L9 14.5 M5.8 11 H8.2" stroke="#000" stroke-width="1.1" fill="none"/><path d="M9.5 5.5 H15 M12.3 5.5 V14.5" stroke="#000" stroke-width="1.3" fill="none"/></svg>
<div class="t" style="left:641px;top:229px;">Автоставка</div>
<div class="t" style="left:641px;top:242px;">из таблицы</div>
<div class="gb" style="left:608px;top:270px;width:97px;height:44px"></div>
<div class="t" style="left:615px;top:264px;padding:0 2px;background:#f0f0f0">Коэфф. умнож.</div>
<div style="left:617px;top:279px;width:80px;height:31px;border:1px solid #c8c8c8;background:#fff"></div>
<div style="left:618px;top:280px;width:61px;height:29px;background:#c0dcc0"></div>
<div class="t" style="left:621px;top:284px;font-size:19px;line-height:22px;-webkit-text-stroke:0.5px #000"><span style="display:inline-block;transform:scaleX(0.84);transform-origin:0 0">1</span></div>
<div style="left:679px;top:281px;width:15px;height:13px;border:1px solid #c3c3c3;background:linear-gradient(#f6f6f6,#e2e2e2)"></div>
<svg style="position:absolute;left:683px;top:286px" width="7" height="4"><path d="M0 4H7L3.5 0Z" fill="#4d6fc0"/></svg>
<div style="left:679px;top:294px;width:15px;height:13px;border:1px solid #c3c3c3;background:linear-gradient(#f6f6f6,#e2e2e2)"></div>
<svg style="position:absolute;left:683px;top:299px" width="7" height="4"><path d="M0 0H7L3.5 4Z" fill="#4d6fc0"/></svg>
<div class="btn" style="left:607px;top:322px;width:105px;height:32px"></div>
<svg style="position:absolute;left:623px;top:328px" width="20" height="20" viewBox="0 0 20 20"><circle cx="10" cy="10" r="8" fill="#00ec44" stroke="#000" stroke-width="2"/><path d="M2.5 9.5 H8.5 M6.5 7.5 L8.5 9.5 L6.5 11.5" stroke="#ff1010" stroke-width="1" fill="none"/><path d="M9.5 14 V6 H12.5 V14" stroke="#000" stroke-width="1.1" fill="none"/><path d="M14 6 V14 M17 6 V14 M14 10 H17" stroke="#000" stroke-width="1.1" fill="none"/></svg>
<div class="t" style="left:647px;top:326px;">Передать</div>
<div class="t" style="left:653px;top:339px;">в ПНС</div>
<div style="left:426px;top:450px;width:541px;height:2px;background:#a0a0a0"></div>
<div style="left:426px;top:456px;width:541px;height:1px;background:#a0a0a0"></div>
<div style="left:427px;top:480px;width:537px;height:137px;border:1px solid #898c95;background:#fff"></div>
<div class="tab" style="left:429px;top:462px;width:73px;height:18px"></div>
<div class="t" style="left:435px;top:465px;">Управление</div>
<div class="tab" style="left:502px;top:462px;width:43px;height:18px"></div>
<div class="t" style="left:509px;top:465px;">MD5</div>
<div class="tab" style="left:544px;top:462px;width:43px;height:18px"></div>
<div class="t" style="left:551px;top:465px;">Ряды</div>
<div class="tab" style="left:586px;top:462px;width:109px;height:18px"></div>
<div class="t" style="left:592px;top:465px;">Позиционирование</div>
<div class="tab" style="left:791px;top:462px;width:88px;height:18px"></div>
<div class="t" style="left:796px;top:465px;">График частот2</div>
<div style="left:695px;top:460px;width:97px;height:21px;border:1px solid #898c95;border-bottom:none;background:#fff"></div>
<div class="t" style="left:703px;top:464px;">График частот1</div>
<div style="left:432px;top:483px;width:530px;height:131px;border-bottom:1px solid #a0a0a0;border-right:1px solid #a0a0a0;background:#f0f0f0"></div>
<svg style="position:absolute;left:0;top:0" width="976" height="657">
<line x1="453.5" y1="487" x2="453.5" y2="597" stroke="#808080" stroke-width="1" stroke-dasharray="1 1"/>
<line x1="467.5" y1="487" x2="467.5" y2="597" stroke="#808080" stroke-width="1" stroke-dasharray="1 1"/>
<line x1="480.5" y1="487" x2="480.5" y2="597" stroke="#808080" stroke-width="1" stroke-dasharray="1 1"/>
<line x1="494.5" y1="487" x2="494.5" y2="597" stroke="#808080" stroke-width="1" stroke-dasharray="1 1"/>
<line x1="508.5" y1="487" x2="508.5" y2="597" stroke="#808080" stroke-width="1" stroke-dasharray="1 1"/>
<line x1="521.5" y1="487" x2="521.5" y2="597" stroke="#808080" stroke-width="1" stroke-dasharray="1 1"/>
<line x1="535.5" y1="487" x2="535.5" y2="597" stroke="#808080" stroke-width="1" stroke-dasharray="1 1"/>
<line x1="549.5" y1="487" x2="549.5" y2="597" stroke="#808080" stroke-width="1" stroke-dasharray="1 1"/>
<line x1="563.5" y1="487" x2="563.5" y2="597" stroke="#808080" stroke-width="1" stroke-dasharray="1 1"/>
<line x1="576.5" y1="487" x2="576.5" y2="597" stroke="#808080" stroke-width="1" stroke-dasharray="1 1"/>
<line x1="590.5" y1="487" x2="590.5" y2="597" stroke="#808080" stroke-width="1" stroke-dasharray="1 1"/>
<line x1="604.5" y1="487" x2="604.5" y2="597" stroke="#808080" stroke-width="1" stroke-dasharray="1 1"/>
<line x1="617.5" y1="487" x2="617.5" y2="597" stroke="#808080" stroke-width="1" stroke-dasharray="1 1"/>
<line x1="631.5" y1="487" x2="631.5" y2="597" stroke="#808080" stroke-width="1" stroke-dasharray="1 1"/>
<line x1="645.5" y1="487" x2="645.5" y2="597" stroke="#808080" stroke-width="1" stroke-dasharray="1 1"/>
<line x1="658.5" y1="487" x2="658.5" y2="597" stroke="#808080" stroke-width="1" stroke-dasharray="1 1"/>
<line x1="672.5" y1="487" x2="672.5" y2="597" stroke="#808080" stroke-width="1" stroke-dasharray="1 1"/>
<line x1="686.5" y1="487" x2="686.5" y2="597" stroke="#808080" stroke-width="1" stroke-dasharray="1 1"/>
<line x1="699.5" y1="487" x2="699.5" y2="597" stroke="#808080" stroke-width="1" stroke-dasharray="1 1"/>
<line x1="713.5" y1="487" x2="713.5" y2="597" stroke="#808080" stroke-width="1" stroke-dasharray="1 1"/>
<line x1="727.5" y1="487" x2="727.5" y2="597" stroke="#808080" stroke-width="1" stroke-dasharray="1 1"/>
<line x1="740.5" y1="487" x2="740.5" y2="597" stroke="#808080" stroke-width="1" stroke-dasharray="1 1"/>
<line x1="754.5" y1="487" x2="754.5" y2="597" stroke="#808080" stroke-width="1" stroke-dasharray="1 1"/>
<line x1="768.5" y1="487" x2="768.5" y2="597" stroke="#808080" stroke-width="1" stroke-dasharray="1 1"/>
<line x1="782.5" y1="487" x2="782.5" y2="597" stroke="#808080" stroke-width="1" stroke-dasharray="1 1"/>
<line x1="795.5" y1="487" x2="795.5" y2="597" stroke="#808080" stroke-width="1" stroke-dasharray="1 1"/>
<line x1="809.5" y1="487" x2="809.5" y2="597" stroke="#808080" stroke-width="1" stroke-dasharray="1 1"/>
<line x1="823.5" y1="487" x2="823.5" y2="597" stroke="#808080" stroke-width="1" stroke-dasharray="1 1"/>
<line x1="836.5" y1="487" x2="836.5" y2="597" stroke="#808080" stroke-width="1" stroke-dasharray="1 1"/>
<line x1="850.5" y1="487" x2="850.5" y2="597" stroke="#808080" stroke-width="1" stroke-dasharray="1 1"/>
<line x1="864.5" y1="487" x2="864.5" y2="597" stroke="#808080" stroke-width="1" stroke-dasharray="1 1"/>
<line x1="877.5" y1="487" x2="877.5" y2="597" stroke="#808080" stroke-width="1" stroke-dasharray="1 1"/>
<line x1="891.5" y1="487" x2="891.5" y2="597" stroke="#808080" stroke-width="1" stroke-dasharray="1 1"/>
<line x1="905.5" y1="487" x2="905.5" y2="597" stroke="#808080" stroke-width="1" stroke-dasharray="1 1"/>
<line x1="918.5" y1="487" x2="918.5" y2="597" stroke="#808080" stroke-width="1" stroke-dasharray="1 1"/>
<line x1="932.5" y1="487" x2="932.5" y2="597" stroke="#808080" stroke-width="1" stroke-dasharray="1 1"/>
<line x1="946.5" y1="487" x2="946.5" y2="597" stroke="#808080" stroke-width="1" stroke-dasharray="1 1"/>
<line x1="444" y1="595.5" x2="956" y2="595.5" stroke="#808080" stroke-width="1" stroke-dasharray="3 3"/>
<line x1="444" y1="568.5" x2="956" y2="568.5" stroke="#808080" stroke-width="1" stroke-dasharray="3 3"/>
<line x1="444" y1="541.5" x2="956" y2="541.5" stroke="#808080" stroke-width="1" stroke-dasharray="3 3"/>
<line x1="444" y1="515.5" x2="956" y2="515.5" stroke="#808080" stroke-width="1" stroke-dasharray="3 3"/>
<line x1="444" y1="488.5" x2="956" y2="488.5" stroke="#808080" stroke-width="1" stroke-dasharray="3 3"/>
<rect x="443.5" y="486.5" width="513" height="110.5" fill="none" stroke="#000" stroke-width="1"/>
<line x1="443" y1="597.5" x2="957" y2="597.5" stroke="#000" stroke-width="1"/>
<line x1="453.5" y1="598" x2="453.5" y2="601" stroke="#000" stroke-width="1"/>
<line x1="467.5" y1="598" x2="467.5" y2="601" stroke="#000" stroke-width="1"/>
<line x1="480.5" y1="598" x2="480.5" y2="601" stroke="#000" stroke-width="1"/>
<line x1="494.5" y1="598" x2="494.5" y2="601" stroke="#000" stroke-width="1"/>
<line x1="508.5" y1="598" x2="508.5" y2="601" stroke="#000" stroke-width="1"/>
<line x1="521.5" y1="598" x2="521.5" y2="601" stroke="#000" stroke-width="1"/>
<line x1="535.5" y1="598" x2="535.5" y2="601" stroke="#000" stroke-width="1"/>
<line x1="549.5" y1="598" x2="549.5" y2="601" stroke="#000" stroke-width="1"/>
<line x1="563.5" y1="598" x2="563.5" y2="601" stroke="#000" stroke-width="1"/>
<line x1="576.5" y1="598" x2="576.5" y2="601" stroke="#000" stroke-width="1"/>
<line x1="590.5" y1="598" x2="590.5" y2="601" stroke="#000" stroke-width="1"/>
<line x1="604.5" y1="598" x2="604.5" y2="601" stroke="#000" stroke-width="1"/>
<line x1="617.5" y1="598" x2="617.5" y2="601" stroke="#000" stroke-width="1"/>
<line x1="631.5" y1="598" x2="631.5" y2="601" stroke="#000" stroke-width="1"/>
<line x1="645.5" y1="598" x2="645.5" y2="601" stroke="#000" stroke-width="1"/>
<line x1="658.5" y1="598" x2="658.5" y2="601" stroke="#000" stroke-width="1"/>
<line x1="672.5" y1="598" x2="672.5" y2="601" stroke="#000" stroke-width="1"/>
<line x1="686.5" y1="598" x2="686.5" y2="601" stroke="#000" stroke-width="1"/>
<line x1="699.5" y1="598" x2="699.5" y2="601" stroke="#000" stroke-width="1"/>
<line x1="713.5" y1="598" x2="713.5" y2="601" stroke="#000" stroke-width="1"/>
<line x1="727.5" y1="598" x2="727.5" y2="601" stroke="#000" stroke-width="1"/>
<line x1="740.5" y1="598" x2="740.5" y2="601" stroke="#000" stroke-width="1"/>
<line x1="754.5" y1="598" x2="754.5" y2="601" stroke="#000" stroke-width="1"/>
<line x1="768.5" y1="598" x2="768.5" y2="601" stroke="#000" stroke-width="1"/>
<line x1="782.5" y1="598" x2="782.5" y2="601" stroke="#000" stroke-width="1"/>
<line x1="795.5" y1="598" x2="795.5" y2="601" stroke="#000" stroke-width="1"/>
<line x1="809.5" y1="598" x2="809.5" y2="601" stroke="#000" stroke-width="1"/>
<line x1="823.5" y1="598" x2="823.5" y2="601" stroke="#000" stroke-width="1"/>
<line x1="836.5" y1="598" x2="836.5" y2="601" stroke="#000" stroke-width="1"/>
<line x1="850.5" y1="598" x2="850.5" y2="601" stroke="#000" stroke-width="1"/>
<line x1="864.5" y1="598" x2="864.5" y2="601" stroke="#000" stroke-width="1"/>
<line x1="877.5" y1="598" x2="877.5" y2="601" stroke="#000" stroke-width="1"/>
<line x1="891.5" y1="598" x2="891.5" y2="601" stroke="#000" stroke-width="1"/>
<line x1="905.5" y1="598" x2="905.5" y2="601" stroke="#000" stroke-width="1"/>
<line x1="918.5" y1="598" x2="918.5" y2="601" stroke="#000" stroke-width="1"/>
<line x1="932.5" y1="598" x2="932.5" y2="601" stroke="#000" stroke-width="1"/>
<line x1="946.5" y1="598" x2="946.5" y2="601" stroke="#000" stroke-width="1"/>
<line x1="441" y1="581.5" x2="443" y2="581.5" stroke="#000" stroke-width="1"/>
<line x1="441" y1="554.5" x2="443" y2="554.5" stroke="#000" stroke-width="1"/>
<line x1="441" y1="528.5" x2="443" y2="528.5" stroke="#000" stroke-width="1"/>
<line x1="441" y1="501.5" x2="443" y2="501.5" stroke="#000" stroke-width="1"/>
<polyline points="453.5,541.5 467.5,595.5 480.5,541.5 494.5,541.5 508.5,568.5 521.5,541.5 535.5,595.5 549.5,515.5 563.5,568.5 576.5,568.5 590.5,541.5 604.5,568.5 617.5,541.5 631.5,541.5 645.5,595.5 658.5,595.5 672.5,568.5 686.5,568.5 699.5,541.5 713.5,595.5 727.5,515.5 740.5,568.5 754.5,541.5 768.5,595.5 782.5,568.5 795.5,568.5 809.5,568.5 823.5,568.5 836.5,488.5 850.5,568.5 864.5,541.5 877.5,541.5 891.5,541.5 905.5,541.5 918.5,595.5 932.5,568.5 946.5,541.5" fill="none" stroke="#8a10f0" stroke-width="1.1"/>
<path d="M453.5 539.5 L455.5 541.5 L453.5 543.5 L451.5 541.5Z" fill="#fff" stroke="#7000d0" stroke-width="0.9"/>
<path d="M467.5 593.5 L469.5 595.5 L467.5 597.5 L465.5 595.5Z" fill="#fff" stroke="#7000d0" stroke-width="0.9"/>
<path d="M480.5 539.5 L482.5 541.5 L480.5 543.5 L478.5 541.5Z" fill="#fff" stroke="#7000d0" stroke-width="0.9"/>
<path d="M494.5 539.5 L496.5 541.5 L494.5 543.5 L492.5 541.5Z" fill="#fff" stroke="#7000d0" stroke-width="0.9"/>
<path d="M508.5 566.5 L510.5 568.5 L508.5 570.5 L506.5 568.5Z" fill="#fff" stroke="#7000d0" stroke-width="0.9"/>
<path d="M521.5 539.5 L523.5 541.5 L521.5 543.5 L519.5 541.5Z" fill="#fff" stroke="#7000d0" stroke-width="0.9"/>
<path d="M535.5 593.5 L537.5 595.5 L535.5 597.5 L533.5 595.5Z" fill="#fff" stroke="#7000d0" stroke-width="0.9"/>
<path d="M549.5 513.5 L551.5 515.5 L549.5 517.5 L547.5 515.5Z" fill="#fff" stroke="#7000d0" stroke-width="0.9"/>
<path d="M563.5 566.5 L565.5 568.5 L563.5 570.5 L561.5 568.5Z" fill="#fff" stroke="#7000d0" stroke-width="0.9"/>
<path d="M576.5 566.5 L578.5 568.5 L576.5 570.5 L574.5 568.5Z" fill="#fff" stroke="#7000d0" stroke-width="0.9"/>
<path d="M590.5 539.5 L592.5 541.5 L590.5 543.5 L588.5 541.5Z" fill="#fff" stroke="#7000d0" stroke-width="0.9"/>
<path d="M604.5 566.5 L606.5 568.5 L604.5 570.5 L602.5 568.5Z" fill="#fff" stroke="#7000d0" stroke-width="0.9"/>
<path d="M617.5 539.5 L619.5 541.5 L617.5 543.5 L615.5 541.5Z" fill="#fff" stroke="#7000d0" stroke-width="0.9"/>
<path d="M631.5 539.5 L633.5 541.5 L631.5 543.5 L629.5 541.5Z" fill="#fff" stroke="#7000d0" stroke-width="0.9"/>
<path d="M645.5 593.5 L647.5 595.5 L645.5 597.5 L643.5 595.5Z" fill="#fff" stroke="#7000d0" stroke-width="0.9"/>
<path d="M658.5 593.5 L660.5 595.5 L658.5 597.5 L656.5 595.5Z" fill="#fff" stroke="#7000d0" stroke-width="0.9"/>
<path d="M672.5 566.5 L674.5 568.5 L672.5 570.5 L670.5 568.5Z" fill="#fff" stroke="#7000d0" stroke-width="0.9"/>
<path d="M686.5 566.5 L688.5 568.5 L686.5 570.5 L684.5 568.5Z" fill="#fff" stroke="#7000d0" stroke-width="0.9"/>
<path d="M699.5 539.5 L701.5 541.5 L699.5 543.5 L697.5 541.5Z" fill="#fff" stroke="#7000d0" stroke-width="0.9"/>
<path d="M713.5 593.5 L715.5 595.5 L713.5 597.5 L711.5 595.5Z" fill="#fff" stroke="#7000d0" stroke-width="0.9"/>
<path d="M727.5 513.5 L729.5 515.5 L727.5 517.5 L725.5 515.5Z" fill="#fff" stroke="#7000d0" stroke-width="0.9"/>
<path d="M740.5 566.5 L742.5 568.5 L740.5 570.5 L738.5 568.5Z" fill="#fff" stroke="#7000d0" stroke-width="0.9"/>
<path d="M754.5 539.5 L756.5 541.5 L754.5 543.5 L752.5 541.5Z" fill="#fff" stroke="#7000d0" stroke-width="0.9"/>
<path d="M768.5 593.5 L770.5 595.5 L768.5 597.5 L766.5 595.5Z" fill="#fff" stroke="#7000d0" stroke-width="0.9"/>
<path d="M782.5 566.5 L784.5 568.5 L782.5 570.5 L780.5 568.5Z" fill="#fff" stroke="#7000d0" stroke-width="0.9"/>
<path d="M795.5 566.5 L797.5 568.5 L795.5 570.5 L793.5 568.5Z" fill="#fff" stroke="#7000d0" stroke-width="0.9"/>
<path d="M809.5 566.5 L811.5 568.5 L809.5 570.5 L807.5 568.5Z" fill="#fff" stroke="#7000d0" stroke-width="0.9"/>
<path d="M823.5 566.5 L825.5 568.5 L823.5 570.5 L821.5 568.5Z" fill="#fff" stroke="#7000d0" stroke-width="0.9"/>
<path d="M836.5 486.5 L838.5 488.5 L836.5 490.5 L834.5 488.5Z" fill="#fff" stroke="#7000d0" stroke-width="0.9"/>
<path d="M850.5 566.5 L852.5 568.5 L850.5 570.5 L848.5 568.5Z" fill="#fff" stroke="#7000d0" stroke-width="0.9"/>
<path d="M864.5 539.5 L866.5 541.5 L864.5 543.5 L862.5 541.5Z" fill="#fff" stroke="#7000d0" stroke-width="0.9"/>
<path d="M877.5 539.5 L879.5 541.5 L877.5 543.5 L875.5 541.5Z" fill="#fff" stroke="#7000d0" stroke-width="0.9"/>
<path d="M891.5 539.5 L893.5 541.5 L891.5 543.5 L889.5 541.5Z" fill="#fff" stroke="#7000d0" stroke-width="0.9"/>
<path d="M905.5 539.5 L907.5 541.5 L905.5 543.5 L903.5 541.5Z" fill="#fff" stroke="#7000d0" stroke-width="0.9"/>
<path d="M918.5 593.5 L920.5 595.5 L918.5 597.5 L916.5 595.5Z" fill="#fff" stroke="#7000d0" stroke-width="0.9"/>
<path d="M932.5 566.5 L934.5 568.5 L932.5 570.5 L930.5 568.5Z" fill="#fff" stroke="#7000d0" stroke-width="0.9"/>
<path d="M946.5 539.5 L948.5 541.5 L946.5 543.5 L944.5 541.5Z" fill="#fff" stroke="#7000d0" stroke-width="0.9"/>
<rect x="447.5" y="528.5" width="12" height="11" fill="#00ccee" stroke="#000" stroke-width="1"/>
<text x="453.5" y="537" font-family="Liberation Sans" font-size="9" font-weight="bold" text-anchor="middle" fill="#000">2</text>
<rect x="461.5" y="582.5" width="12" height="11" fill="#00ccee" stroke="#000" stroke-width="1"/>
<text x="467.5" y="591" font-family="Liberation Sans" font-size="9" font-weight="bold" text-anchor="middle" fill="#000">0</text>
<rect x="474.5" y="528.5" width="12" height="11" fill="#00ccee" stroke="#000" stroke-width="1"/>
<text x="480.5" y="537" font-family="Liberation Sans" font-size="9" font-weight="bold" text-anchor="middle" fill="#000">2</text>
<rect x="488.5" y="528.5" width="12" height="11" fill="#00ccee" stroke="#000" stroke-width="1"/>
<text x="494.5" y="537" font-family="Liberation Sans" font-size="9" font-weight="bold" text-anchor="middle" fill="#000">2</text>
<rect x="502.5" y="555.5" width="12" height="11" fill="#00ccee" stroke="#000" stroke-width="1"/>
<text x="508.5" y="564" font-family="Liberation Sans" font-size="9" font-weight="bold" text-anchor="middle" fill="#000">1</text>
<rect x="515.5" y="528.5" width="12" height="11" fill="#00ccee" stroke="#000" stroke-width="1"/>
<text x="521.5" y="537" font-family="Liberation Sans" font-size="9" font-weight="bold" text-anchor="middle" fill="#000">2</text>
<rect x="529.5" y="582.5" width="12" height="11" fill="#00ccee" stroke="#000" stroke-width="1"/>
<text x="535.5" y="591" font-family="Liberation Sans" font-size="9" font-weight="bold" text-anchor="middle" fill="#000">0</text>
<rect x="543.5" y="502.5" width="12" height="11" fill="#00ccee" stroke="#000" stroke-width="1"/>
<text x="549.5" y="511" font-family="Liberation Sans" font-size="9" font-weight="bold" text-anchor="middle" fill="#000">3</text>
<rect x="557.5" y="555.5" width="12" height="11" fill="#00ccee" stroke="#000" stroke-width="1"/>
<text x="563.5" y="564" font-family="Liberation Sans" font-size="9" font-weight="bold" text-anchor="middle" fill="#000">1</text>
<rect x="570.5" y="555.5" width="12" height="11" fill="#00ccee" stroke="#000" stroke-width="1"/>
<text x="576.5" y="564" font-family="Liberation Sans" font-size="9" font-weight="bold" text-anchor="middle" fill="#000">1</text>
<rect x="584.5" y="528.5" width="12" height="11" fill="#00ccee" stroke="#000" stroke-width="1"/>
<text x="590.5" y="537" font-family="Liberation Sans" font-size="9" font-weight="bold" text-anchor="middle" fill="#000">2</text>
<rect x="598.5" y="555.5" width="12" height="11" fill="#00ccee" stroke="#000" stroke-width="1"/>
<text x="604.5" y="564" font-family="Liberation Sans" font-size="9" font-weight="bold" text-anchor="middle" fill="#000">1</text>
<rect x="611.5" y="528.5" width="12" height="11" fill="#00ccee" stroke="#000" stroke-width="1"/>
<text x="617.5" y="537" font-family="Liberation Sans" font-size="9" font-weight="bold" text-anchor="middle" fill="#000">2</text>
<rect x="625.5" y="528.5" width="12" height="11" fill="#00ccee" stroke="#000" stroke-width="1"/>
<text x="631.5" y="537" font-family="Liberation Sans" font-size="9" font-weight="bold" text-anchor="middle" fill="#000">2</text>
<rect x="639.5" y="582.5" width="12" height="11" fill="#00ccee" stroke="#000" stroke-width="1"/>
<text x="645.5" y="591" font-family="Liberation Sans" font-size="9" font-weight="bold" text-anchor="middle" fill="#000">0</text>
<rect x="652.5" y="582.5" width="12" height="11" fill="#00ccee" stroke="#000" stroke-width="1"/>
<text x="658.5" y="591" font-family="Liberation Sans" font-size="9" font-weight="bold" text-anchor="middle" fill="#000">0</text>
<rect x="666.5" y="555.5" width="12" height="11" fill="#00ccee" stroke="#000" stroke-width="1"/>
<text x="672.5" y="564" font-family="Liberation Sans" font-size="9" font-weight="bold" text-anchor="middle" fill="#000">1</text>
<rect x="680.5" y="555.5" width="12" height="11" fill="#00ccee" stroke="#000" stroke-width="1"/>
<text x="686.5" y="564" font-family="Liberation Sans" font-size="9" font-weight="bold" text-anchor="middle" fill="#000">1</text>
<rect x="693.5" y="528.5" width="12" height="11" fill="#00ccee" stroke="#000" stroke-width="1"/>
<text x="699.5" y="537" font-family="Liberation Sans" font-size="9" font-weight="bold" text-anchor="middle" fill="#000">2</text>
<rect x="707.5" y="582.5" width="12" height="11" fill="#00ccee" stroke="#000" stroke-width="1"/>
<text x="713.5" y="591" font-family="Liberation Sans" font-size="9" font-weight="bold" text-anchor="middle" fill="#000">0</text>
<rect x="721.5" y="502.5" width="12" height="11" fill="#00ccee" stroke="#000" stroke-width="1"/>
<text x="727.5" y="511" font-family="Liberation Sans" font-size="9" font-weight="bold" text-anchor="middle" fill="#000">3</text>
<rect x="734.5" y="555.5" width="12" height="11" fill="#00ccee" stroke="#000" stroke-width="1"/>
<text x="740.5" y="564" font-family="Liberation Sans" font-size="9" font-weight="bold" text-anchor="middle" fill="#000">1</text>
<rect x="748.5" y="528.5" width="12" height="11" fill="#00ccee" stroke="#000" stroke-width="1"/>
<text x="754.5" y="537" font-family="Liberation Sans" font-size="9" font-weight="bold" text-anchor="middle" fill="#000">2</text>
<rect x="762.5" y="582.5" width="12" height="11" fill="#00ccee" stroke="#000" stroke-width="1"/>
<text x="768.5" y="591" font-family="Liberation Sans" font-size="9" font-weight="bold" text-anchor="middle" fill="#000">0</text>
<rect x="776.5" y="555.5" width="12" height="11" fill="#00ccee" stroke="#000" stroke-width="1"/>
<text x="782.5" y="564" font-family="Liberation Sans" font-size="9" font-weight="bold" text-anchor="middle" fill="#000">1</text>
<rect x="789.5" y="555.5" width="12" height="11" fill="#00ccee" stroke="#000" stroke-width="1"/>
<text x="795.5" y="564" font-family="Liberation Sans" font-size="9" font-weight="bold" text-anchor="middle" fill="#000">1</text>
<rect x="803.5" y="555.5" width="12" height="11" fill="#00ccee" stroke="#000" stroke-width="1"/>
<text x="809.5" y="564" font-family="Liberation Sans" font-size="9" font-weight="bold" text-anchor="middle" fill="#000">1</text>
<rect x="817.5" y="555.5" width="12" height="11" fill="#00ccee" stroke="#000" stroke-width="1"/>
<text x="823.5" y="564" font-family="Liberation Sans" font-size="9" font-weight="bold" text-anchor="middle" fill="#000">1</text>
<rect x="830" y="484" width="13" height="2" fill="#00ccee"/>
<rect x="844.5" y="555.5" width="12" height="11" fill="#00ccee" stroke="#000" stroke-width="1"/>
<text x="850.5" y="564" font-family="Liberation Sans" font-size="9" font-weight="bold" text-anchor="middle" fill="#000">1</text>
<rect x="858.5" y="528.5" width="12" height="11" fill="#00ccee" stroke="#000" stroke-width="1"/>
<text x="864.5" y="537" font-family="Liberation Sans" font-size="9" font-weight="bold" text-anchor="middle" fill="#000">2</text>
<rect x="871.5" y="528.5" width="12" height="11" fill="#00ccee" stroke="#000" stroke-width="1"/>
<text x="877.5" y="537" font-family="Liberation Sans" font-size="9" font-weight="bold" text-anchor="middle" fill="#000">2</text>
<rect x="885.5" y="528.5" width="12" height="11" fill="#00ccee" stroke="#000" stroke-width="1"/>
<text x="891.5" y="537" font-family="Liberation Sans" font-size="9" font-weight="bold" text-anchor="middle" fill="#000">2</text>
<rect x="899.5" y="528.5" width="12" height="11" fill="#00ccee" stroke="#000" stroke-width="1"/>
<text x="905.5" y="537" font-family="Liberation Sans" font-size="9" font-weight="bold" text-anchor="middle" fill="#000">2</text>
<rect x="912.5" y="582.5" width="12" height="11" fill="#00ccee" stroke="#000" stroke-width="1"/>
<text x="918.5" y="591" font-family="Liberation Sans" font-size="9" font-weight="bold" text-anchor="middle" fill="#000">0</text>
<rect x="926.5" y="555.5" width="12" height="11" fill="#00ccee" stroke="#000" stroke-width="1"/>
<text x="932.5" y="564" font-family="Liberation Sans" font-size="9" font-weight="bold" text-anchor="middle" fill="#000">1</text>
<rect x="940.5" y="528.5" width="12" height="11" fill="#00ccee" stroke="#000" stroke-width="1"/>
<text x="946.5" y="537" font-family="Liberation Sans" font-size="9" font-weight="bold" text-anchor="middle" fill="#000">2</text>
<text x="453.0" y="610" font-family="Liberation Sans" font-size="11" text-anchor="middle" fill="#1a1a1a">0</text>
<text x="466.7" y="610" font-family="Liberation Sans" font-size="11" text-anchor="middle" fill="#1a1a1a">1</text>
<text x="480.4" y="610" font-family="Liberation Sans" font-size="11" text-anchor="middle" fill="#1a1a1a">2</text>
<text x="494.1" y="610" font-family="Liberation Sans" font-size="11" text-anchor="middle" fill="#1a1a1a">3</text>
<text x="507.8" y="610" font-family="Liberation Sans" font-size="11" text-anchor="middle" fill="#1a1a1a">4</text>
<text x="521.5" y="610" font-family="Liberation Sans" font-size="11" text-anchor="middle" fill="#1a1a1a">5</text>
<text x="535.1" y="610" font-family="Liberation Sans" font-size="11" text-anchor="middle" fill="#1a1a1a">6</text>
<text x="548.8" y="610" font-family="Liberation Sans" font-size="11" text-anchor="middle" fill="#1a1a1a">7</text>
<text x="562.5" y="610" font-family="Liberation Sans" font-size="11" text-anchor="middle" fill="#1a1a1a">8</text>
<text x="576.2" y="610" font-family="Liberation Sans" font-size="11" text-anchor="middle" fill="#1a1a1a">9</text>
<text x="589.9" y="610" font-family="Liberation Sans" font-size="11" text-anchor="middle" fill="#1a1a1a">10</text>
<text x="603.6" y="610" font-family="Liberation Sans" font-size="11" text-anchor="middle" fill="#1a1a1a">11</text>
<text x="617.3" y="610" font-family="Liberation Sans" font-size="11" text-anchor="middle" fill="#1a1a1a">12</text>
<text x="631.0" y="610" font-family="Liberation Sans" font-size="11" text-anchor="middle" fill="#1a1a1a">13</text>
<text x="644.7" y="610" font-family="Liberation Sans" font-size="11" text-anchor="middle" fill="#1a1a1a">14</text>
<text x="658.4" y="610" font-family="Liberation Sans" font-size="11" text-anchor="middle" fill="#1a1a1a">15</text>
<text x="672.0" y="610" font-family="Liberation Sans" font-size="11" text-anchor="middle" fill="#1a1a1a">16</text>
<text x="685.7" y="610" font-family="Liberation Sans" font-size="11" text-anchor="middle" fill="#1a1a1a">17</text>
<text x="699.4" y="610" font-family="Liberation Sans" font-size="11" text-anchor="middle" fill="#1a1a1a">18</text>
<text x="713.1" y="610" font-family="Liberation Sans" font-size="11" text-anchor="middle" fill="#1a1a1a">19</text>
<text x="726.8" y="610" font-family="Liberation Sans" font-size="11" text-anchor="middle" fill="#1a1a1a">20</text>
<text x="740.5" y="610" font-family="Liberation Sans" font-size="11" text-anchor="middle" fill="#1a1a1a">21</text>
<text x="754.2" y="610" font-family="Liberation Sans" font-size="11" text-anchor="middle" fill="#1a1a1a">22</text>
<text x="767.9" y="610" font-family="Liberation Sans" font-size="11" text-anchor="middle" fill="#1a1a1a">23</text>
<text x="781.6" y="610" font-family="Liberation Sans" font-size="11" text-anchor="middle" fill="#1a1a1a">24</text>
<text x="795.2" y="610" font-family="Liberation Sans" font-size="11" text-anchor="middle" fill="#1a1a1a">25</text>
<text x="808.9" y="610" font-family="Liberation Sans" font-size="11" text-anchor="middle" fill="#1a1a1a">26</text>
<text x="822.6" y="610" font-family="Liberation Sans" font-size="11" text-anchor="middle" fill="#1a1a1a">27</text>
<text x="836.3" y="610" font-family="Liberation Sans" font-size="11" text-anchor="middle" fill="#1a1a1a">28</text>
<text x="850.0" y="610" font-family="Liberation Sans" font-size="11" text-anchor="middle" fill="#1a1a1a">29</text>
<text x="863.7" y="610" font-family="Liberation Sans" font-size="11" text-anchor="middle" fill="#1a1a1a">30</text>
<text x="877.4" y="610" font-family="Liberation Sans" font-size="11" text-anchor="middle" fill="#1a1a1a">31</text>
<text x="891.1" y="610" font-family="Liberation Sans" font-size="11" text-anchor="middle" fill="#1a1a1a">32</text>
<text x="904.8" y="610" font-family="Liberation Sans" font-size="11" text-anchor="middle" fill="#1a1a1a">33</text>
<text x="918.5" y="610" font-family="Liberation Sans" font-size="11" text-anchor="middle" fill="#1a1a1a">34</text>
<text x="932.1" y="610" font-family="Liberation Sans" font-size="11" text-anchor="middle" fill="#1a1a1a">35</text>
<text x="945.8" y="610" font-family="Liberation Sans" font-size="11" text-anchor="middle" fill="#1a1a1a">36</text>
<text x="438" y="599.5" font-family="Liberation Sans" font-size="11" text-anchor="middle" fill="#1a1a1a">0</text>
<text x="438" y="572.5" font-family="Liberation Sans" font-size="11" text-anchor="middle" fill="#1a1a1a">1</text>
<text x="438" y="545.5" font-family="Liberation Sans" font-size="11" text-anchor="middle" fill="#1a1a1a">2</text>
<text x="438" y="519.5" font-family="Liberation Sans" font-size="11" text-anchor="middle" fill="#1a1a1a">3</text>
<text x="438" y="492.5" font-family="Liberation Sans" font-size="11" text-anchor="middle" fill="#1a1a1a">4</text>
</svg></body></html>
